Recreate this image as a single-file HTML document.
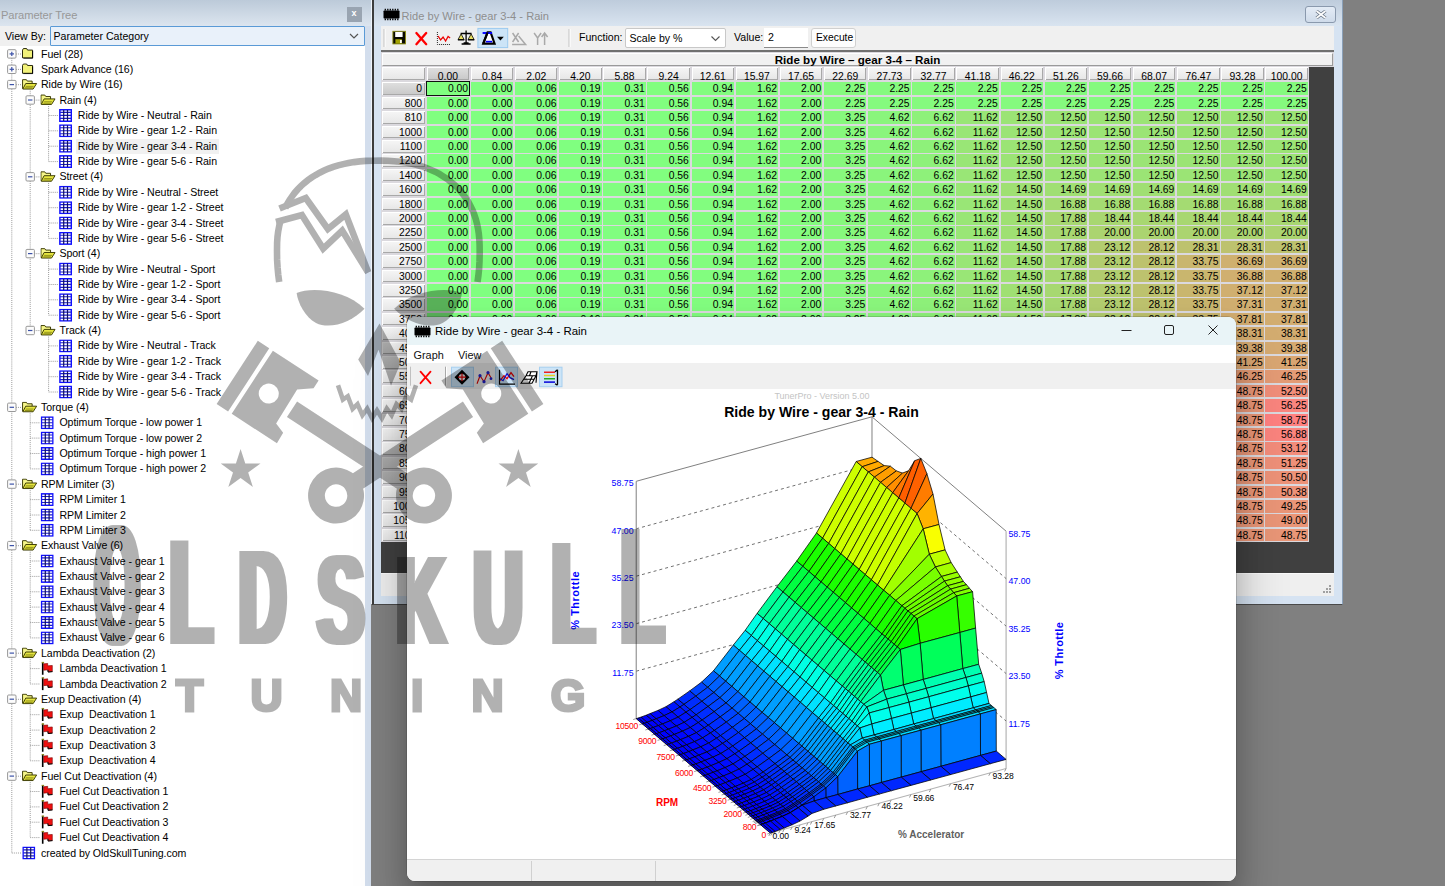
<!DOCTYPE html><html><head><meta charset="utf-8"><title>TunerPro</title><style>
*{box-sizing:border-box}
html,body{margin:0;padding:0}
body{width:1445px;height:886px;overflow:hidden;background:#808080;position:relative;font-family:"Liberation Sans",sans-serif;font-size:11px;color:#000}
.abs{position:absolute}
#lp{position:absolute;left:0;top:0;width:365px;height:886px;background:#fff}
#lpt{position:absolute;left:0;top:0;width:371px;height:26px;background:linear-gradient(#bccad9,#dce5ef)}
#lpt span{position:absolute;left:1px;top:9px;font-size:11.2px;color:#989898;letter-spacing:-0.1px}
#lpx{position:absolute;left:346.5px;top:7px;width:15px;height:15px;background:#99a4b1;color:#fff;font-weight:bold;font-size:9px;line-height:13px;text-align:center}
#vb{position:absolute;left:0;top:26px;width:365px;height:20px;background:#f0f0f0}
#vb span{position:absolute;left:5px;top:4px;font-size:10.6px}
#cb{position:absolute;left:50px;top:0;width:315px;height:20px;border:1px solid #5a9ad6;background:#e9f1fa;border-radius:1px}
#cb span{left:2.5px;top:3px}
.tl{position:absolute;white-space:pre;font-size:10.6px;line-height:15px;height:15px;padding:0 2px 0 1.5px;letter-spacing:-0.05px}
.tl.sel{background:#f1f1f1}
#split{position:absolute;left:365px;top:0;width:5.6px;height:886px;background:#d3deed}
#split2{position:absolute;left:370.6px;top:0;width:1.4px;height:604px;background:#eef3fa}
#tw{position:absolute;left:371.6px;top:-1px;width:971.9px;height:605.5px;background:#d6e3f2;border:1px solid #4a4a4a;border-left:2px solid #3c3c3c;border-top:none;border-right-color:#8aa0b8}
#twt{position:absolute;left:0;top:0;width:100%;height:27px;background:linear-gradient(#bdcbdb,#d9e4f0)}
#twt span{position:absolute;left:28px;top:10.5px;font-size:11.1px;color:#8e8e8e;white-space:pre}
#twx{position:absolute;left:931px;top:7px;width:31px;height:16.5px;border:1px solid #8a99ad;border-radius:3px;background:linear-gradient(#e4ecf6,#cfdbea)}
#tb{position:absolute;left:7.4px;top:27px;width:953.5px;height:24px;background:#f0f0f0}
#tb span{position:absolute;top:5px;font-size:10.6px;white-space:pre}
#tbl{position:absolute;left:7.4px;top:51px;width:953.5px;height:523px;background:#404040;border-top:2px solid #707070}
#cells{position:absolute;left:0;top:0;width:928px;height:490.2px;background:#dbd9de}
#ttlbg{position:absolute;left:0;top:0;width:953.5px;height:15px;background:#dbd9de}
#ttl{position:absolute;left:1px;top:0.5px;width:951px;height:13.5px;background:#f1f1f1;border:1px solid #fff;border-right-color:#9a9a9a;border-bottom-color:#9a9a9a;text-align:center;font-weight:bold;font-size:11.6px;line-height:12px;white-space:pre}
.grid{position:absolute;left:1.2px;top:15.4px;display:grid;grid-template-columns:42.8px repeat(20,42.35px);grid-template-rows:13.1px;grid-auto-rows:12.62px;column-gap:1.8px;row-gap:1.8px;font-size:10.35px;line-height:14px;text-align:right}
.grid i,.grid b{font-style:normal;font-weight:normal;display:block;overflow:hidden;padding-right:1px;white-space:pre}
.grid b{background:linear-gradient(#f6f6f6,#e6e6e6);box-shadow:inset 1px 1px 0 #fff,inset -1px -1px 0 #a8a8a8;padding-right:3px}
.grid b.h{text-align:center;padding:0;line-height:20.2px}
.grid b.hs{background:linear-gradient(#e0e0e0,#c8c8c8)}
.grid i.cur{outline:1.2px solid #111;outline-offset:-0.2px}
#sb{position:absolute;left:7.4px;top:574px;width:953.5px;height:23px;background:#efefef;border-top:1px solid #fafafa}
#gw{position:absolute;left:407px;top:317px;width:829px;height:563.5px;border-radius:8px;background:#fff;overflow:hidden;box-shadow:0 34px 50px 4px rgba(0,0,0,.22),0 12px 24px 0 rgba(0,0,0,.14),0 0 0 0.5px rgba(60,60,60,.4)}
#gwt{position:absolute;left:0;top:0;width:100%;height:28.2px;background:#e9f4f7}
#gwt span{position:absolute;left:28px;top:8px;font-size:11.45px;white-space:pre}
#gwm{position:absolute;left:0;top:28.2px;width:100%;height:18.1px;background:#fff}
#gwm span{position:absolute;top:3.6px;font-size:10.9px;color:#111}
#gtb{position:absolute;left:0;top:46.3px;width:100%;height:25.3px;background:#f0f0f0}
.hl{position:absolute;top:3px;height:19.5px;background:#cce4f7;border:1px solid #a9d1f1;border-radius:1px}
#gsb{position:absolute;left:0;top:541.5px;width:100%;height:22px;background:#f0f0f0;border-top:1px solid #d4d4d4}
#gsb i{position:absolute;top:1px;width:1px;height:20px;background:#d0d0d0}
.c0{background:#80ff80}.c1{background:#81fe80}.c2{background:#81fe7f}.c3{background:#82fd7f}.c4{background:#84fb7e}.c5{background:#85fa7e}.c6{background:#87f87d}.c7{background:#8af57c}.c8{background:#8ef17a}.c9{background:#99e676}.c10{background:#9be475}.c11{background:#9fe073}.c12{background:#a0df73}.c13{background:#a4db72}.c14{background:#a7d871}.c15{background:#a8d771}.c16{background:#abd470}.c17{background:#b2cd6f}.c18{background:#bdc26e}.c19{background:#c9b66e}.c20{background:#cfb06f}.c21{background:#d0af6f}.c22{background:#d0af70}.c23{background:#d1ae70}.c24{background:#d2ad70}.c25{background:#d3ac70}.c26{background:#d5aa71}.c27{background:#d9a672}.c28{background:#e49b75}.c29{background:#e99677}.c30{background:#f18e7a}.c31{background:#fa857e}.c32{background:#ff8080}.c33{background:#fb847e}.c34{background:#f38c7b}.c35{background:#ef9079}.c36{background:#ed9278}.c37{background:#ea9577}</style></head><body>
<svg width="0" height="0" style="position:absolute"><defs>
<symbol id="i-closed" viewBox="0 0 13 12"><path d="M0.5 2.5 L1.5 0.8 L5 0.8 L6 2.5 L11.5 2.5 L11.5 11 L0.5 11 Z" fill="#f2f27a" stroke="#1a1a00" stroke-width="1"/><path d="M11.5 3.5V11.5H1.5" stroke="#000" stroke-width="1" fill="none"/></symbol>
<symbol id="i-open" viewBox="0 0 16 12"><path d="M0.5 10.5 L0.5 1 L4.5 1 L5.5 2.5 L10.5 2.5 L10.5 5" fill="#f6f68a" stroke="#3a3a00" stroke-width="1"/><path d="M0.8 10.8 L3.8 5 L15.2 5 L11.5 10.8 Z" fill="#e6e640" stroke="#3a3a00" stroke-width="1"/><path d="M3 9.5 L11 9.5 M3.8 8 L12 8" stroke="#7a7a10" stroke-width="0.8"/></symbol>
<symbol id="i-tbl" viewBox="0 0 13 13"><rect x="0.75" y="0.75" width="11.5" height="11.5" fill="#fff" stroke="#1010ff" stroke-width="1.5"/><path d="M1 3.4H12M1 6.4H12M1 9.4H12" stroke="#1a1ad0" stroke-width="1.1"/><path d="M4.6 1V12M8.4 1V12" stroke="#101060" stroke-width="1.2"/></symbol>
<symbol id="i-flag" viewBox="0 0 13 13"><path d="M2 0.5V13" stroke="#000" stroke-width="1.6"/><path d="M1 0.6H3.4" stroke="#8a8a20" stroke-width="1.4"/><path d="M3 2 L7 1.6 L7 4 L11.6 3.6 L11.6 9.6 L7.4 10 L7.4 8 L3 8.4 Z" fill="#ee1010" stroke="#700" stroke-width="0.6"/><path d="M7.2 8 L7.4 10.2 L11.8 9.8" stroke="#000" stroke-width="1" fill="none"/></symbol>
<symbol id="i-box" viewBox="0 0 9 9"><rect x="0.5" y="0.5" width="8" height="8" rx="1" fill="#fdfdfd" stroke="#9a9a9a"/></symbol>
</defs></svg>
<div id="lp">
<svg style="position:absolute;left:0;top:0" width="365" height="886">
<g stroke="#9a9a9a" stroke-width="1" stroke-dasharray="1 1.05" fill="none">
<path d="M11.8 54.0L21.3 54.0"/>
<path d="M11.8 69.4L21.3 69.4"/>
<path d="M11.8 84.7L21.3 84.7"/>
<path d="M30.2 100.1L39.7 100.1"/>
<path d="M48.6 115.5L58.1 115.5"/>
<path d="M48.6 130.8L58.1 130.8"/>
<path d="M48.6 146.2L58.1 146.2"/>
<path d="M48.6 161.6L58.1 161.6"/>
<path d="M30.2 176.9L39.7 176.9"/>
<path d="M48.6 192.3L58.1 192.3"/>
<path d="M48.6 207.7L58.1 207.7"/>
<path d="M48.6 223.0L58.1 223.0"/>
<path d="M48.6 238.4L58.1 238.4"/>
<path d="M30.2 253.7L39.7 253.7"/>
<path d="M48.6 269.1L58.1 269.1"/>
<path d="M48.6 284.5L58.1 284.5"/>
<path d="M48.6 299.8L58.1 299.8"/>
<path d="M48.6 315.2L58.1 315.2"/>
<path d="M30.2 330.6L39.7 330.6"/>
<path d="M48.6 345.9L58.1 345.9"/>
<path d="M48.6 361.3L58.1 361.3"/>
<path d="M48.6 376.7L58.1 376.7"/>
<path d="M48.6 392.0L58.1 392.0"/>
<path d="M11.8 407.4L21.3 407.4"/>
<path d="M30.2 422.8L39.7 422.8"/>
<path d="M30.2 438.1L39.7 438.1"/>
<path d="M30.2 453.5L39.7 453.5"/>
<path d="M30.2 468.9L39.7 468.9"/>
<path d="M11.8 484.2L21.3 484.2"/>
<path d="M30.2 499.6L39.7 499.6"/>
<path d="M30.2 515.0L39.7 515.0"/>
<path d="M30.2 530.3L39.7 530.3"/>
<path d="M11.8 545.7L21.3 545.7"/>
<path d="M30.2 561.0L39.7 561.0"/>
<path d="M30.2 576.4L39.7 576.4"/>
<path d="M30.2 591.8L39.7 591.8"/>
<path d="M30.2 607.1L39.7 607.1"/>
<path d="M30.2 622.5L39.7 622.5"/>
<path d="M30.2 637.9L39.7 637.9"/>
<path d="M11.8 653.2L21.3 653.2"/>
<path d="M30.2 668.6L39.7 668.6"/>
<path d="M30.2 684.0L39.7 684.0"/>
<path d="M11.8 699.3L21.3 699.3"/>
<path d="M30.2 714.7L39.7 714.7"/>
<path d="M30.2 730.1L39.7 730.1"/>
<path d="M30.2 745.4L39.7 745.4"/>
<path d="M30.2 760.8L39.7 760.8"/>
<path d="M11.8 776.2L21.3 776.2"/>
<path d="M30.2 791.5L39.7 791.5"/>
<path d="M30.2 806.9L39.7 806.9"/>
<path d="M30.2 822.2L39.7 822.2"/>
<path d="M30.2 837.6L39.7 837.6"/>
<path d="M11.8 853.0L21.3 853.0"/>
<path d="M30.2 90.7L30.2 330.6"/>
<path d="M48.6 106.1L48.6 161.6"/>
<path d="M48.6 182.9L48.6 238.4"/>
<path d="M48.6 259.7L48.6 315.2"/>
<path d="M48.6 336.6L48.6 392.0"/>
<path d="M30.2 413.4L30.2 468.9"/>
<path d="M30.2 490.2L30.2 530.3"/>
<path d="M30.2 551.7L30.2 637.9"/>
<path d="M30.2 659.2L30.2 684.0"/>
<path d="M30.2 705.3L30.2 760.8"/>
<path d="M30.2 782.2L30.2 837.6"/>
<path d="M11.8 54.0L11.8 853.0"/>
</g>
<rect x="7.6" y="49.7" width="8.4" height="8.4" rx="1" fill="#fcfcfc" stroke="#989898" stroke-width="1"/>
<path d="M9.6 53.9H14.0" stroke="#3c52a8" stroke-width="1.2"/>
<path d="M11.8 51.7V56.1" stroke="#3c52a8" stroke-width="1.2"/>
<use href="#i-closed" x="22.0" y="47.8" width="12" height="11"/>
<rect x="7.6" y="65.1" width="8.4" height="8.4" rx="1" fill="#fcfcfc" stroke="#989898" stroke-width="1"/>
<path d="M9.6 69.3H14.0" stroke="#3c52a8" stroke-width="1.2"/>
<path d="M11.8 67.1V71.5" stroke="#3c52a8" stroke-width="1.2"/>
<use href="#i-closed" x="22.0" y="63.2" width="12" height="11"/>
<rect x="7.6" y="80.4" width="8.4" height="8.4" rx="1" fill="#fcfcfc" stroke="#989898" stroke-width="1"/>
<path d="M9.6 84.6H14.0" stroke="#3c52a8" stroke-width="1.2"/>
<use href="#i-open" x="22.0" y="78.7" width="15.5" height="11.5"/>
<rect x="26.0" y="95.8" width="8.4" height="8.4" rx="1" fill="#fcfcfc" stroke="#989898" stroke-width="1"/>
<path d="M28.0 100.0H32.4" stroke="#3c52a8" stroke-width="1.2"/>
<use href="#i-open" x="40.4" y="94.1" width="15.5" height="11.5"/>
<use href="#i-tbl" x="59.1" y="109.0" width="13" height="13"/>
<use href="#i-tbl" x="59.1" y="124.3" width="13" height="13"/>
<use href="#i-tbl" x="59.1" y="139.7" width="13" height="13"/>
<use href="#i-tbl" x="59.1" y="155.1" width="13" height="13"/>
<rect x="26.0" y="172.6" width="8.4" height="8.4" rx="1" fill="#fcfcfc" stroke="#989898" stroke-width="1"/>
<path d="M28.0 176.8H32.4" stroke="#3c52a8" stroke-width="1.2"/>
<use href="#i-open" x="40.4" y="170.9" width="15.5" height="11.5"/>
<use href="#i-tbl" x="59.1" y="185.8" width="13" height="13"/>
<use href="#i-tbl" x="59.1" y="201.2" width="13" height="13"/>
<use href="#i-tbl" x="59.1" y="216.5" width="13" height="13"/>
<use href="#i-tbl" x="59.1" y="231.9" width="13" height="13"/>
<rect x="26.0" y="249.4" width="8.4" height="8.4" rx="1" fill="#fcfcfc" stroke="#989898" stroke-width="1"/>
<path d="M28.0 253.6H32.4" stroke="#3c52a8" stroke-width="1.2"/>
<use href="#i-open" x="40.4" y="247.7" width="15.5" height="11.5"/>
<use href="#i-tbl" x="59.1" y="262.6" width="13" height="13"/>
<use href="#i-tbl" x="59.1" y="278.0" width="13" height="13"/>
<use href="#i-tbl" x="59.1" y="293.3" width="13" height="13"/>
<use href="#i-tbl" x="59.1" y="308.7" width="13" height="13"/>
<rect x="26.0" y="326.3" width="8.4" height="8.4" rx="1" fill="#fcfcfc" stroke="#989898" stroke-width="1"/>
<path d="M28.0 330.5H32.4" stroke="#3c52a8" stroke-width="1.2"/>
<use href="#i-open" x="40.4" y="324.6" width="15.5" height="11.5"/>
<use href="#i-tbl" x="59.1" y="339.4" width="13" height="13"/>
<use href="#i-tbl" x="59.1" y="354.8" width="13" height="13"/>
<use href="#i-tbl" x="59.1" y="370.2" width="13" height="13"/>
<use href="#i-tbl" x="59.1" y="385.5" width="13" height="13"/>
<rect x="7.6" y="403.1" width="8.4" height="8.4" rx="1" fill="#fcfcfc" stroke="#989898" stroke-width="1"/>
<path d="M9.6 407.3H14.0" stroke="#3c52a8" stroke-width="1.2"/>
<use href="#i-open" x="22.0" y="401.4" width="15.5" height="11.5"/>
<use href="#i-tbl" x="40.7" y="416.3" width="13" height="13"/>
<use href="#i-tbl" x="40.7" y="431.6" width="13" height="13"/>
<use href="#i-tbl" x="40.7" y="447.0" width="13" height="13"/>
<use href="#i-tbl" x="40.7" y="462.4" width="13" height="13"/>
<rect x="7.6" y="479.9" width="8.4" height="8.4" rx="1" fill="#fcfcfc" stroke="#989898" stroke-width="1"/>
<path d="M9.6 484.1H14.0" stroke="#3c52a8" stroke-width="1.2"/>
<use href="#i-open" x="22.0" y="478.2" width="15.5" height="11.5"/>
<use href="#i-tbl" x="40.7" y="493.1" width="13" height="13"/>
<use href="#i-tbl" x="40.7" y="508.5" width="13" height="13"/>
<use href="#i-tbl" x="40.7" y="523.8" width="13" height="13"/>
<rect x="7.6" y="541.4" width="8.4" height="8.4" rx="1" fill="#fcfcfc" stroke="#989898" stroke-width="1"/>
<path d="M9.6 545.6H14.0" stroke="#3c52a8" stroke-width="1.2"/>
<use href="#i-open" x="22.0" y="539.7" width="15.5" height="11.5"/>
<use href="#i-tbl" x="40.7" y="554.5" width="13" height="13"/>
<use href="#i-tbl" x="40.7" y="569.9" width="13" height="13"/>
<use href="#i-tbl" x="40.7" y="585.3" width="13" height="13"/>
<use href="#i-tbl" x="40.7" y="600.6" width="13" height="13"/>
<use href="#i-tbl" x="40.7" y="616.0" width="13" height="13"/>
<use href="#i-tbl" x="40.7" y="631.4" width="13" height="13"/>
<rect x="7.6" y="648.9" width="8.4" height="8.4" rx="1" fill="#fcfcfc" stroke="#989898" stroke-width="1"/>
<path d="M9.6 653.1H14.0" stroke="#3c52a8" stroke-width="1.2"/>
<use href="#i-open" x="22.0" y="647.2" width="15.5" height="11.5"/>
<use href="#i-flag" x="40.7" y="661.6" width="13" height="13.5"/>
<use href="#i-flag" x="40.7" y="677.0" width="13" height="13.5"/>
<rect x="7.6" y="695.0" width="8.4" height="8.4" rx="1" fill="#fcfcfc" stroke="#989898" stroke-width="1"/>
<path d="M9.6 699.2H14.0" stroke="#3c52a8" stroke-width="1.2"/>
<use href="#i-open" x="22.0" y="693.3" width="15.5" height="11.5"/>
<use href="#i-flag" x="40.7" y="707.7" width="13" height="13.5"/>
<use href="#i-flag" x="40.7" y="723.1" width="13" height="13.5"/>
<use href="#i-flag" x="40.7" y="738.4" width="13" height="13.5"/>
<use href="#i-flag" x="40.7" y="753.8" width="13" height="13.5"/>
<rect x="7.6" y="771.9" width="8.4" height="8.4" rx="1" fill="#fcfcfc" stroke="#989898" stroke-width="1"/>
<path d="M9.6 776.1H14.0" stroke="#3c52a8" stroke-width="1.2"/>
<use href="#i-open" x="22.0" y="770.2" width="15.5" height="11.5"/>
<use href="#i-flag" x="40.7" y="784.5" width="13" height="13.5"/>
<use href="#i-flag" x="40.7" y="799.9" width="13" height="13.5"/>
<use href="#i-flag" x="40.7" y="815.2" width="13" height="13.5"/>
<use href="#i-flag" x="40.7" y="830.6" width="13" height="13.5"/>
<use href="#i-tbl" x="22.3" y="846.5" width="13" height="13"/>
</svg>
<div class="tl" style="left:39.5px;top:46.5px">Fuel (28)</div>
<div class="tl" style="left:39.5px;top:61.9px">Spark Advance (16)</div>
<div class="tl" style="left:39.5px;top:77.2px">Ride by Wire (16)</div>
<div class="tl" style="left:57.9px;top:92.6px">Rain (4)</div>
<div class="tl" style="left:76.3px;top:108.0px">Ride by Wire - Neutral - Rain</div>
<div class="tl" style="left:76.3px;top:123.3px">Ride by Wire - gear 1-2 - Rain</div>
<div class="tl sel" style="left:76.3px;top:138.7px">Ride by Wire - gear 3-4 - Rain</div>
<div class="tl" style="left:76.3px;top:154.1px">Ride by Wire - gear 5-6 - Rain</div>
<div class="tl" style="left:57.9px;top:169.4px">Street (4)</div>
<div class="tl" style="left:76.3px;top:184.8px">Ride by Wire - Neutral - Street</div>
<div class="tl" style="left:76.3px;top:200.2px">Ride by Wire - gear 1-2 - Street</div>
<div class="tl" style="left:76.3px;top:215.5px">Ride by Wire - gear 3-4 - Street</div>
<div class="tl" style="left:76.3px;top:230.9px">Ride by Wire - gear 5-6 - Street</div>
<div class="tl" style="left:57.9px;top:246.2px">Sport (4)</div>
<div class="tl" style="left:76.3px;top:261.6px">Ride by Wire - Neutral - Sport</div>
<div class="tl" style="left:76.3px;top:277.0px">Ride by Wire - gear 1-2 - Sport</div>
<div class="tl" style="left:76.3px;top:292.3px">Ride by Wire - gear 3-4 - Sport</div>
<div class="tl" style="left:76.3px;top:307.7px">Ride by Wire - gear 5-6 - Sport</div>
<div class="tl" style="left:57.9px;top:323.1px">Track (4)</div>
<div class="tl" style="left:76.3px;top:338.4px">Ride by Wire - Neutral - Track</div>
<div class="tl" style="left:76.3px;top:353.8px">Ride by Wire - gear 1-2 - Track</div>
<div class="tl" style="left:76.3px;top:369.2px">Ride by Wire - gear 3-4 - Track</div>
<div class="tl" style="left:76.3px;top:384.5px">Ride by Wire - gear 5-6 - Track</div>
<div class="tl" style="left:39.5px;top:399.9px">Torque (4)</div>
<div class="tl" style="left:57.9px;top:415.3px">Optimum Torque - low power 1</div>
<div class="tl" style="left:57.9px;top:430.6px">Optimum Torque - low power 2</div>
<div class="tl" style="left:57.9px;top:446.0px">Optimum Torque - high power 1</div>
<div class="tl" style="left:57.9px;top:461.4px">Optimum Torque - high power 2</div>
<div class="tl" style="left:39.5px;top:476.7px">RPM Limiter (3)</div>
<div class="tl" style="left:57.9px;top:492.1px">RPM Limiter 1</div>
<div class="tl" style="left:57.9px;top:507.5px">RPM Limiter 2</div>
<div class="tl" style="left:57.9px;top:522.8px">RPM Limiter 3</div>
<div class="tl" style="left:39.5px;top:538.2px">Exhaust Valve (6)</div>
<div class="tl" style="left:57.9px;top:553.5px">Exhaust Valve - gear 1</div>
<div class="tl" style="left:57.9px;top:568.9px">Exhaust Valve - gear 2</div>
<div class="tl" style="left:57.9px;top:584.3px">Exhaust Valve - gear 3</div>
<div class="tl" style="left:57.9px;top:599.6px">Exhaust Valve - gear 4</div>
<div class="tl" style="left:57.9px;top:615.0px">Exhaust Valve - gear 5</div>
<div class="tl" style="left:57.9px;top:630.4px">Exhaust Valve - gear 6</div>
<div class="tl" style="left:39.5px;top:645.7px">Lambda Deactivation (2)</div>
<div class="tl" style="left:57.9px;top:661.1px">Lambda Deactivation 1</div>
<div class="tl" style="left:57.9px;top:676.5px">Lambda Deactivation 2</div>
<div class="tl" style="left:39.5px;top:691.8px">Exup Deactivation (4)</div>
<div class="tl" style="left:57.9px;top:707.2px">Exup  Deactivation 1</div>
<div class="tl" style="left:57.9px;top:722.6px">Exup  Deactivation 2</div>
<div class="tl" style="left:57.9px;top:737.9px">Exup  Deactivation 3</div>
<div class="tl" style="left:57.9px;top:753.3px">Exup  Deactivation 4</div>
<div class="tl" style="left:39.5px;top:768.7px">Fuel Cut Deactivation (4)</div>
<div class="tl" style="left:57.9px;top:784.0px">Fuel Cut Deactivation 1</div>
<div class="tl" style="left:57.9px;top:799.4px">Fuel Cut Deactivation 2</div>
<div class="tl" style="left:57.9px;top:814.8px">Fuel Cut Deactivation 3</div>
<div class="tl" style="left:57.9px;top:830.1px">Fuel Cut Deactivation 4</div>
<div class="tl" style="left:39.5px;top:845.5px">created by OldSkullTuning.com</div>
</div>
<div id="split"></div><div id="split2"></div>
<div id="lpt"><span>Parameter Tree</span><div id="lpx">x</div></div>
<div id="vb"><span>View By:</span><div id="cb"><span>Parameter Category</span><svg class="abs" style="right:5px;top:6px" width="10" height="7"><path d="M1 1L5 5L9 1" fill="none" stroke="#555" stroke-width="1.2"/></svg></div></div>
<div id="tw"><div id="twt">
<svg class="abs" style="left:9px;top:9px" width="17" height="13" viewBox="0 0 17 13"><rect x="0.5" y="2.4" width="16" height="8.2" rx="0.8" fill="#000"/><path d="M2.3 0.8V2.6M4.8 0.8V2.6M7.3 0.8V2.6M9.8 0.8V2.6M12.3 0.8V2.6M14.8 0.8V2.6M2.3 10.4V12.2M4.8 10.4V12.2M7.3 10.4V12.2M9.8 10.4V12.2M12.3 10.4V12.2M14.8 10.4V12.2" stroke="#000" stroke-width="1.3"/></svg>
<span>Ride by Wire - gear 3-4 - Rain</span>
<div id="twx"><svg class="abs" style="left:9px;top:3px" width="12" height="9" viewBox="0 0 12 9"><path d="M1.5 1L10.5 8M10.5 1L1.5 8" stroke="#6a7686" stroke-width="3.2"/><path d="M1.5 1L10.5 8M10.5 1L1.5 8" stroke="#fff" stroke-width="1.6"/></svg></div>
</div>
<div id="tb"><svg class="abs" style="left:0;top:0" width="400" height="24" viewBox="380.4 26 400 24">
<path d="M383.5 29V47" stroke="#b8b8b8" stroke-width="1"/><path d="M384.5 29V47" stroke="#fff" stroke-width="1"/>
<rect x="392.3" y="31.3" width="12.6" height="12.6" fill="#0a0a00" stroke="#8a8a10" stroke-width="0.9"/><rect x="394.6" y="32" width="7.4" height="5" fill="#fff"/><rect x="394.8" y="39.2" width="6.4" height="4.4" fill="#a4a400"/><rect x="399.4" y="40" width="1.8" height="3" fill="#fff"/>
<path d="M415.8 33L425.6 44.2M425.6 33L415.8 44.2" stroke="#f00" stroke-width="2.3" stroke-linecap="round"/>
<path d="M436.8 32V44.5H450" stroke="#222" stroke-width="1" stroke-dasharray="1 1" fill="none"/><path d="M437.5 36L440 40L442.5 37L445 41L447.5 36.5L449.5 38" stroke="#e00" stroke-width="1.3" fill="none"/>
<path d="M465.5 30.5V43M460 33.5H471M461 44H470M463 43H468" stroke="#000" stroke-width="1.3" fill="none"/><path d="M457.5 39.5L460.5 34L463.5 39.5ZM467.5 39.5L470.5 34L473.5 39.5Z" fill="#e8e060" stroke="#000" stroke-width="0.8"/><path d="M457.3 39.8H463.7M467.3 39.8H473.7" stroke="#000" stroke-width="1.2"/>
<rect x="477.3" y="28.4" width="29.8" height="19.2" fill="#cce4f7" stroke="#9ccaf0"/>
<path d="M482.6 43.6H494L490 32.3H487Z" fill="#fff" stroke="#000" stroke-width="2.1" stroke-linejoin="miter"/><path d="M482 33H491.5" stroke="#00f" stroke-width="1.9"/><path d="M485.2 41.6H491.6" stroke="#00f" stroke-width="1.6"/><path d="M487 32.3L482.6 43.6" stroke="#000" stroke-width="2.1"/><path d="M496.4 36.8H503.2L499.8 40.6Z" fill="#000"/>
<path d="M512 33L518 42M518 33L512 42M511.5 44.5H525L518 36" stroke="#a9a9a9" stroke-width="1.5" fill="none"/>
<path d="M533.5 33L537 38L540.5 33M537 38V45M544 45V33.5M541 37L544 33L547 37" stroke="#a9a9a9" stroke-width="1.5" fill="none"/>
<path d="M568.5 29V47" stroke="#b8b8b8" stroke-width="1"/><path d="M569.5 29V47" stroke="#fff" stroke-width="1"/>
</svg>
<span style="left:198px">Function:</span>
<div class="abs" style="left:244.5px;top:1.5px;width:101px;height:20px;background:#fff;border:1px solid #c8c8c8;border-radius:2px"><span style="left:3px;top:3.5px">Scale by %</span><svg class="abs" style="right:5px;top:7px" width="9" height="6"><path d="M0.5 0.5L4.5 4.5L8.5 0.5" fill="none" stroke="#555" stroke-width="1.1"/></svg></div>
<span style="left:353px">Value:</span>
<div class="abs" style="left:383px;top:1.5px;width:44px;height:20px;background:#fff;border-bottom:1px solid #8a8a8a"><span style="left:4px;top:3.5px">2</span></div>
<div class="abs" style="left:430.5px;top:2px;width:45px;height:19.5px;background:#fdfdfd;border:1px solid #d0d0d0;border-radius:3px"><span style="left:3.5px;top:3px;font-size:10.3px">Execute</span></div></div>
<div id="tbl"><div id="cells"><div class="grid">
<b class="h"></b>
<b class="h hs">0.00</b>
<b class="h">0.84</b>
<b class="h">2.02</b>
<b class="h">4.20</b>
<b class="h">5.88</b>
<b class="h">9.24</b>
<b class="h">12.61</b>
<b class="h">15.97</b>
<b class="h">17.65</b>
<b class="h">22.69</b>
<b class="h">27.73</b>
<b class="h">32.77</b>
<b class="h">41.18</b>
<b class="h">46.22</b>
<b class="h">51.26</b>
<b class="h">59.66</b>
<b class="h">68.07</b>
<b class="h">76.47</b>
<b class="h">93.28</b>
<b class="h">100.00</b>
<b class="r hs">0</b>
<i class="c0 cur">0.00</i>
<i class="c0">0.00</i>
<i class="c0">0.06</i>
<i class="c0">0.19</i>
<i class="c1">0.31</i>
<i class="c2">0.56</i>
<i class="c3">0.94</i>
<i class="c4">1.62</i>
<i class="c4">2.00</i>
<i class="c5">2.25</i>
<i class="c5">2.25</i>
<i class="c5">2.25</i>
<i class="c5">2.25</i>
<i class="c5">2.25</i>
<i class="c5">2.25</i>
<i class="c5">2.25</i>
<i class="c5">2.25</i>
<i class="c5">2.25</i>
<i class="c5">2.25</i>
<i class="c5">2.25</i>
<b class="r">800</b>
<i class="c0">0.00</i>
<i class="c0">0.00</i>
<i class="c0">0.06</i>
<i class="c0">0.19</i>
<i class="c1">0.31</i>
<i class="c2">0.56</i>
<i class="c3">0.94</i>
<i class="c4">1.62</i>
<i class="c4">2.00</i>
<i class="c5">2.25</i>
<i class="c5">2.25</i>
<i class="c5">2.25</i>
<i class="c5">2.25</i>
<i class="c5">2.25</i>
<i class="c5">2.25</i>
<i class="c5">2.25</i>
<i class="c5">2.25</i>
<i class="c5">2.25</i>
<i class="c5">2.25</i>
<i class="c5">2.25</i>
<b class="r">810</b>
<i class="c0">0.00</i>
<i class="c0">0.00</i>
<i class="c0">0.06</i>
<i class="c0">0.19</i>
<i class="c1">0.31</i>
<i class="c2">0.56</i>
<i class="c3">0.94</i>
<i class="c4">1.62</i>
<i class="c4">2.00</i>
<i class="c6">3.25</i>
<i class="c7">4.62</i>
<i class="c8">6.62</i>
<i class="c9">11.62</i>
<i class="c10">12.50</i>
<i class="c10">12.50</i>
<i class="c10">12.50</i>
<i class="c10">12.50</i>
<i class="c10">12.50</i>
<i class="c10">12.50</i>
<i class="c10">12.50</i>
<b class="r">1000</b>
<i class="c0">0.00</i>
<i class="c0">0.00</i>
<i class="c0">0.06</i>
<i class="c0">0.19</i>
<i class="c1">0.31</i>
<i class="c2">0.56</i>
<i class="c3">0.94</i>
<i class="c4">1.62</i>
<i class="c4">2.00</i>
<i class="c6">3.25</i>
<i class="c7">4.62</i>
<i class="c8">6.62</i>
<i class="c9">11.62</i>
<i class="c10">12.50</i>
<i class="c10">12.50</i>
<i class="c10">12.50</i>
<i class="c10">12.50</i>
<i class="c10">12.50</i>
<i class="c10">12.50</i>
<i class="c10">12.50</i>
<b class="r">1100</b>
<i class="c0">0.00</i>
<i class="c0">0.00</i>
<i class="c0">0.06</i>
<i class="c0">0.19</i>
<i class="c1">0.31</i>
<i class="c2">0.56</i>
<i class="c3">0.94</i>
<i class="c4">1.62</i>
<i class="c4">2.00</i>
<i class="c6">3.25</i>
<i class="c7">4.62</i>
<i class="c8">6.62</i>
<i class="c9">11.62</i>
<i class="c10">12.50</i>
<i class="c10">12.50</i>
<i class="c10">12.50</i>
<i class="c10">12.50</i>
<i class="c10">12.50</i>
<i class="c10">12.50</i>
<i class="c10">12.50</i>
<b class="r">1200</b>
<i class="c0">0.00</i>
<i class="c0">0.00</i>
<i class="c0">0.06</i>
<i class="c0">0.19</i>
<i class="c1">0.31</i>
<i class="c2">0.56</i>
<i class="c3">0.94</i>
<i class="c4">1.62</i>
<i class="c4">2.00</i>
<i class="c6">3.25</i>
<i class="c7">4.62</i>
<i class="c8">6.62</i>
<i class="c9">11.62</i>
<i class="c10">12.50</i>
<i class="c10">12.50</i>
<i class="c10">12.50</i>
<i class="c10">12.50</i>
<i class="c10">12.50</i>
<i class="c10">12.50</i>
<i class="c10">12.50</i>
<b class="r">1400</b>
<i class="c0">0.00</i>
<i class="c0">0.00</i>
<i class="c0">0.06</i>
<i class="c0">0.19</i>
<i class="c1">0.31</i>
<i class="c2">0.56</i>
<i class="c3">0.94</i>
<i class="c4">1.62</i>
<i class="c4">2.00</i>
<i class="c6">3.25</i>
<i class="c7">4.62</i>
<i class="c8">6.62</i>
<i class="c9">11.62</i>
<i class="c10">12.50</i>
<i class="c10">12.50</i>
<i class="c10">12.50</i>
<i class="c10">12.50</i>
<i class="c10">12.50</i>
<i class="c10">12.50</i>
<i class="c10">12.50</i>
<b class="r">1600</b>
<i class="c0">0.00</i>
<i class="c0">0.00</i>
<i class="c0">0.06</i>
<i class="c0">0.19</i>
<i class="c1">0.31</i>
<i class="c2">0.56</i>
<i class="c3">0.94</i>
<i class="c4">1.62</i>
<i class="c4">2.00</i>
<i class="c6">3.25</i>
<i class="c7">4.62</i>
<i class="c8">6.62</i>
<i class="c9">11.62</i>
<i class="c11">14.50</i>
<i class="c12">14.69</i>
<i class="c12">14.69</i>
<i class="c12">14.69</i>
<i class="c12">14.69</i>
<i class="c12">14.69</i>
<i class="c12">14.69</i>
<b class="r">1800</b>
<i class="c0">0.00</i>
<i class="c0">0.00</i>
<i class="c0">0.06</i>
<i class="c0">0.19</i>
<i class="c1">0.31</i>
<i class="c2">0.56</i>
<i class="c3">0.94</i>
<i class="c4">1.62</i>
<i class="c4">2.00</i>
<i class="c6">3.25</i>
<i class="c7">4.62</i>
<i class="c8">6.62</i>
<i class="c9">11.62</i>
<i class="c11">14.50</i>
<i class="c13">16.88</i>
<i class="c13">16.88</i>
<i class="c13">16.88</i>
<i class="c13">16.88</i>
<i class="c13">16.88</i>
<i class="c13">16.88</i>
<b class="r">2000</b>
<i class="c0">0.00</i>
<i class="c0">0.00</i>
<i class="c0">0.06</i>
<i class="c0">0.19</i>
<i class="c1">0.31</i>
<i class="c2">0.56</i>
<i class="c3">0.94</i>
<i class="c4">1.62</i>
<i class="c4">2.00</i>
<i class="c6">3.25</i>
<i class="c7">4.62</i>
<i class="c8">6.62</i>
<i class="c9">11.62</i>
<i class="c11">14.50</i>
<i class="c14">17.88</i>
<i class="c15">18.44</i>
<i class="c15">18.44</i>
<i class="c15">18.44</i>
<i class="c15">18.44</i>
<i class="c15">18.44</i>
<b class="r">2250</b>
<i class="c0">0.00</i>
<i class="c0">0.00</i>
<i class="c0">0.06</i>
<i class="c0">0.19</i>
<i class="c1">0.31</i>
<i class="c2">0.56</i>
<i class="c3">0.94</i>
<i class="c4">1.62</i>
<i class="c4">2.00</i>
<i class="c6">3.25</i>
<i class="c7">4.62</i>
<i class="c8">6.62</i>
<i class="c9">11.62</i>
<i class="c11">14.50</i>
<i class="c14">17.88</i>
<i class="c16">20.00</i>
<i class="c16">20.00</i>
<i class="c16">20.00</i>
<i class="c16">20.00</i>
<i class="c16">20.00</i>
<b class="r">2500</b>
<i class="c0">0.00</i>
<i class="c0">0.00</i>
<i class="c0">0.06</i>
<i class="c0">0.19</i>
<i class="c1">0.31</i>
<i class="c2">0.56</i>
<i class="c3">0.94</i>
<i class="c4">1.62</i>
<i class="c4">2.00</i>
<i class="c6">3.25</i>
<i class="c7">4.62</i>
<i class="c8">6.62</i>
<i class="c9">11.62</i>
<i class="c11">14.50</i>
<i class="c14">17.88</i>
<i class="c17">23.12</i>
<i class="c18">28.12</i>
<i class="c18">28.31</i>
<i class="c18">28.31</i>
<i class="c18">28.31</i>
<b class="r">2750</b>
<i class="c0">0.00</i>
<i class="c0">0.00</i>
<i class="c0">0.06</i>
<i class="c0">0.19</i>
<i class="c1">0.31</i>
<i class="c2">0.56</i>
<i class="c3">0.94</i>
<i class="c4">1.62</i>
<i class="c4">2.00</i>
<i class="c6">3.25</i>
<i class="c7">4.62</i>
<i class="c8">6.62</i>
<i class="c9">11.62</i>
<i class="c11">14.50</i>
<i class="c14">17.88</i>
<i class="c17">23.12</i>
<i class="c18">28.12</i>
<i class="c19">33.75</i>
<i class="c20">36.69</i>
<i class="c20">36.69</i>
<b class="r">3000</b>
<i class="c0">0.00</i>
<i class="c0">0.00</i>
<i class="c0">0.06</i>
<i class="c0">0.19</i>
<i class="c1">0.31</i>
<i class="c2">0.56</i>
<i class="c3">0.94</i>
<i class="c4">1.62</i>
<i class="c4">2.00</i>
<i class="c6">3.25</i>
<i class="c7">4.62</i>
<i class="c8">6.62</i>
<i class="c9">11.62</i>
<i class="c11">14.50</i>
<i class="c14">17.88</i>
<i class="c17">23.12</i>
<i class="c18">28.12</i>
<i class="c19">33.75</i>
<i class="c21">36.88</i>
<i class="c21">36.88</i>
<b class="r">3250</b>
<i class="c0">0.00</i>
<i class="c0">0.00</i>
<i class="c0">0.06</i>
<i class="c0">0.19</i>
<i class="c1">0.31</i>
<i class="c2">0.56</i>
<i class="c3">0.94</i>
<i class="c4">1.62</i>
<i class="c4">2.00</i>
<i class="c6">3.25</i>
<i class="c7">4.62</i>
<i class="c8">6.62</i>
<i class="c9">11.62</i>
<i class="c11">14.50</i>
<i class="c14">17.88</i>
<i class="c17">23.12</i>
<i class="c18">28.12</i>
<i class="c19">33.75</i>
<i class="c22">37.12</i>
<i class="c22">37.12</i>
<b class="r">3500</b>
<i class="c0">0.00</i>
<i class="c0">0.00</i>
<i class="c0">0.06</i>
<i class="c0">0.19</i>
<i class="c1">0.31</i>
<i class="c2">0.56</i>
<i class="c3">0.94</i>
<i class="c4">1.62</i>
<i class="c4">2.00</i>
<i class="c6">3.25</i>
<i class="c7">4.62</i>
<i class="c8">6.62</i>
<i class="c9">11.62</i>
<i class="c11">14.50</i>
<i class="c14">17.88</i>
<i class="c17">23.12</i>
<i class="c18">28.12</i>
<i class="c19">33.75</i>
<i class="c23">37.31</i>
<i class="c23">37.31</i>
<b class="r">3750</b>
<i class="c0">0.00</i>
<i class="c0">0.00</i>
<i class="c0">0.06</i>
<i class="c0">0.19</i>
<i class="c1">0.31</i>
<i class="c2">0.56</i>
<i class="c3">0.94</i>
<i class="c4">1.62</i>
<i class="c4">2.00</i>
<i class="c6">3.25</i>
<i class="c7">4.62</i>
<i class="c8">6.62</i>
<i class="c9">11.62</i>
<i class="c11">14.50</i>
<i class="c14">17.88</i>
<i class="c17">23.12</i>
<i class="c18">28.12</i>
<i class="c19">33.75</i>
<i class="c24">37.81</i>
<i class="c24">37.81</i>
<b class="r">4000</b>
<i class="c0">0.00</i>
<i class="c0">0.00</i>
<i class="c0">0.06</i>
<i class="c0">0.19</i>
<i class="c1">0.31</i>
<i class="c2">0.56</i>
<i class="c3">0.94</i>
<i class="c4">1.62</i>
<i class="c4">2.00</i>
<i class="c6">3.25</i>
<i class="c7">4.62</i>
<i class="c8">6.62</i>
<i class="c9">11.62</i>
<i class="c11">14.50</i>
<i class="c14">17.88</i>
<i class="c17">23.12</i>
<i class="c18">28.12</i>
<i class="c19">33.75</i>
<i class="c25">38.31</i>
<i class="c25">38.31</i>
<b class="r">4500</b>
<i class="c0">0.00</i>
<i class="c0">0.00</i>
<i class="c0">0.06</i>
<i class="c0">0.19</i>
<i class="c1">0.31</i>
<i class="c2">0.56</i>
<i class="c3">0.94</i>
<i class="c4">1.62</i>
<i class="c4">2.00</i>
<i class="c6">3.25</i>
<i class="c7">4.62</i>
<i class="c8">6.62</i>
<i class="c9">11.62</i>
<i class="c11">14.50</i>
<i class="c14">17.88</i>
<i class="c17">23.12</i>
<i class="c18">28.12</i>
<i class="c19">33.75</i>
<i class="c26">39.38</i>
<i class="c26">39.38</i>
<b class="r">5000</b>
<i class="c0">0.00</i>
<i class="c0">0.00</i>
<i class="c0">0.06</i>
<i class="c0">0.19</i>
<i class="c1">0.31</i>
<i class="c2">0.56</i>
<i class="c3">0.94</i>
<i class="c4">1.62</i>
<i class="c4">2.00</i>
<i class="c6">3.25</i>
<i class="c7">4.62</i>
<i class="c8">6.62</i>
<i class="c9">11.62</i>
<i class="c11">14.50</i>
<i class="c14">17.88</i>
<i class="c17">23.12</i>
<i class="c18">28.12</i>
<i class="c19">33.75</i>
<i class="c27">41.25</i>
<i class="c27">41.25</i>
<b class="r">5500</b>
<i class="c0">0.00</i>
<i class="c0">0.00</i>
<i class="c0">0.06</i>
<i class="c0">0.19</i>
<i class="c1">0.31</i>
<i class="c2">0.56</i>
<i class="c3">0.94</i>
<i class="c4">1.62</i>
<i class="c4">2.00</i>
<i class="c6">3.25</i>
<i class="c7">4.62</i>
<i class="c8">6.62</i>
<i class="c9">11.62</i>
<i class="c11">14.50</i>
<i class="c14">17.88</i>
<i class="c17">23.12</i>
<i class="c18">28.12</i>
<i class="c19">33.75</i>
<i class="c28">46.25</i>
<i class="c28">46.25</i>
<b class="r">6000</b>
<i class="c0">0.00</i>
<i class="c0">0.00</i>
<i class="c0">0.06</i>
<i class="c0">0.19</i>
<i class="c1">0.31</i>
<i class="c2">0.56</i>
<i class="c3">0.94</i>
<i class="c4">1.62</i>
<i class="c4">2.00</i>
<i class="c6">3.25</i>
<i class="c7">4.62</i>
<i class="c8">6.62</i>
<i class="c9">11.62</i>
<i class="c11">14.50</i>
<i class="c14">17.88</i>
<i class="c17">23.12</i>
<i class="c18">28.12</i>
<i class="c19">33.75</i>
<i class="c29">48.75</i>
<i class="c30">52.50</i>
<b class="r">6500</b>
<i class="c0">0.00</i>
<i class="c0">0.00</i>
<i class="c0">0.06</i>
<i class="c0">0.19</i>
<i class="c1">0.31</i>
<i class="c2">0.56</i>
<i class="c3">0.94</i>
<i class="c4">1.62</i>
<i class="c4">2.00</i>
<i class="c6">3.25</i>
<i class="c7">4.62</i>
<i class="c8">6.62</i>
<i class="c9">11.62</i>
<i class="c11">14.50</i>
<i class="c14">17.88</i>
<i class="c17">23.12</i>
<i class="c18">28.12</i>
<i class="c19">33.75</i>
<i class="c29">48.75</i>
<i class="c31">56.25</i>
<b class="r">7000</b>
<i class="c0">0.00</i>
<i class="c0">0.00</i>
<i class="c0">0.06</i>
<i class="c0">0.19</i>
<i class="c1">0.31</i>
<i class="c2">0.56</i>
<i class="c3">0.94</i>
<i class="c4">1.62</i>
<i class="c4">2.00</i>
<i class="c6">3.25</i>
<i class="c7">4.62</i>
<i class="c8">6.62</i>
<i class="c9">11.62</i>
<i class="c11">14.50</i>
<i class="c14">17.88</i>
<i class="c17">23.12</i>
<i class="c18">28.12</i>
<i class="c19">33.75</i>
<i class="c29">48.75</i>
<i class="c32">58.75</i>
<b class="r">7500</b>
<i class="c0">0.00</i>
<i class="c0">0.00</i>
<i class="c0">0.06</i>
<i class="c0">0.19</i>
<i class="c1">0.31</i>
<i class="c2">0.56</i>
<i class="c3">0.94</i>
<i class="c4">1.62</i>
<i class="c4">2.00</i>
<i class="c6">3.25</i>
<i class="c7">4.62</i>
<i class="c8">6.62</i>
<i class="c9">11.62</i>
<i class="c11">14.50</i>
<i class="c14">17.88</i>
<i class="c17">23.12</i>
<i class="c18">28.12</i>
<i class="c19">33.75</i>
<i class="c29">48.75</i>
<i class="c33">56.88</i>
<b class="r">8000</b>
<i class="c0">0.00</i>
<i class="c0">0.00</i>
<i class="c0">0.06</i>
<i class="c0">0.19</i>
<i class="c1">0.31</i>
<i class="c2">0.56</i>
<i class="c3">0.94</i>
<i class="c4">1.62</i>
<i class="c4">2.00</i>
<i class="c6">3.25</i>
<i class="c7">4.62</i>
<i class="c8">6.62</i>
<i class="c9">11.62</i>
<i class="c11">14.50</i>
<i class="c14">17.88</i>
<i class="c17">23.12</i>
<i class="c18">28.12</i>
<i class="c19">33.75</i>
<i class="c29">48.75</i>
<i class="c34">53.12</i>
<b class="r">8500</b>
<i class="c0">0.00</i>
<i class="c0">0.00</i>
<i class="c0">0.06</i>
<i class="c0">0.19</i>
<i class="c1">0.31</i>
<i class="c2">0.56</i>
<i class="c3">0.94</i>
<i class="c4">1.62</i>
<i class="c4">2.00</i>
<i class="c6">3.25</i>
<i class="c7">4.62</i>
<i class="c8">6.62</i>
<i class="c9">11.62</i>
<i class="c11">14.50</i>
<i class="c14">17.88</i>
<i class="c17">23.12</i>
<i class="c18">28.12</i>
<i class="c19">33.75</i>
<i class="c29">48.75</i>
<i class="c35">51.25</i>
<b class="r">9000</b>
<i class="c0">0.00</i>
<i class="c0">0.00</i>
<i class="c0">0.06</i>
<i class="c0">0.19</i>
<i class="c1">0.31</i>
<i class="c2">0.56</i>
<i class="c3">0.94</i>
<i class="c4">1.62</i>
<i class="c4">2.00</i>
<i class="c6">3.25</i>
<i class="c7">4.62</i>
<i class="c8">6.62</i>
<i class="c9">11.62</i>
<i class="c11">14.50</i>
<i class="c14">17.88</i>
<i class="c17">23.12</i>
<i class="c18">28.12</i>
<i class="c19">33.75</i>
<i class="c29">48.75</i>
<i class="c36">50.50</i>
<b class="r">9500</b>
<i class="c0">0.00</i>
<i class="c0">0.00</i>
<i class="c0">0.06</i>
<i class="c0">0.19</i>
<i class="c1">0.31</i>
<i class="c2">0.56</i>
<i class="c3">0.94</i>
<i class="c4">1.62</i>
<i class="c4">2.00</i>
<i class="c6">3.25</i>
<i class="c7">4.62</i>
<i class="c8">6.62</i>
<i class="c9">11.62</i>
<i class="c11">14.50</i>
<i class="c14">17.88</i>
<i class="c17">23.12</i>
<i class="c18">28.12</i>
<i class="c19">33.75</i>
<i class="c29">48.75</i>
<i class="c36">50.38</i>
<b class="r">10000</b>
<i class="c0">0.00</i>
<i class="c0">0.00</i>
<i class="c0">0.06</i>
<i class="c0">0.19</i>
<i class="c1">0.31</i>
<i class="c2">0.56</i>
<i class="c3">0.94</i>
<i class="c4">1.62</i>
<i class="c4">2.00</i>
<i class="c6">3.25</i>
<i class="c7">4.62</i>
<i class="c8">6.62</i>
<i class="c9">11.62</i>
<i class="c11">14.50</i>
<i class="c14">17.88</i>
<i class="c17">23.12</i>
<i class="c18">28.12</i>
<i class="c19">33.75</i>
<i class="c29">48.75</i>
<i class="c37">49.25</i>
<b class="r">10500</b>
<i class="c0">0.00</i>
<i class="c0">0.00</i>
<i class="c0">0.06</i>
<i class="c0">0.19</i>
<i class="c1">0.31</i>
<i class="c2">0.56</i>
<i class="c3">0.94</i>
<i class="c4">1.62</i>
<i class="c4">2.00</i>
<i class="c6">3.25</i>
<i class="c7">4.62</i>
<i class="c8">6.62</i>
<i class="c9">11.62</i>
<i class="c11">14.50</i>
<i class="c14">17.88</i>
<i class="c17">23.12</i>
<i class="c18">28.12</i>
<i class="c19">33.75</i>
<i class="c29">48.75</i>
<i class="c37">49.00</i>
<b class="r">11000</b>
<i class="c0">0.00</i>
<i class="c0">0.00</i>
<i class="c0">0.06</i>
<i class="c0">0.19</i>
<i class="c1">0.31</i>
<i class="c2">0.56</i>
<i class="c3">0.94</i>
<i class="c4">1.62</i>
<i class="c4">2.00</i>
<i class="c6">3.25</i>
<i class="c7">4.62</i>
<i class="c8">6.62</i>
<i class="c9">11.62</i>
<i class="c11">14.50</i>
<i class="c14">17.88</i>
<i class="c17">23.12</i>
<i class="c18">28.12</i>
<i class="c19">33.75</i>
<i class="c29">48.75</i>
<i class="c29">48.75</i>
</div></div><div id="ttlbg"></div><div id="ttl">Ride by Wire – gear 3-4 – Rain</div></div>
<div id="sb"><svg class="abs" style="right:2px;bottom:2px" width="10" height="10"><g fill="#a0a0a0"><rect x="7" y="7" width="2" height="2"/><rect x="4" y="7" width="2" height="2"/><rect x="1" y="7" width="2" height="2"/><rect x="7" y="4" width="2" height="2"/><rect x="4" y="4" width="2" height="2"/><rect x="7" y="1" width="2" height="2"/></g></svg></div>
</div>
<div id="gw"><div id="gwt">
<svg class="abs" style="left:7px;top:7.5px" width="17" height="13" viewBox="0 0 17 13"><rect x="0.5" y="2.4" width="16" height="8.2" rx="0.8" fill="#000"/><path d="M2.3 0.8V2.6M4.8 0.8V2.6M7.3 0.8V2.6M9.8 0.8V2.6M12.3 0.8V2.6M14.8 0.8V2.6M2.3 10.4V12.2M4.8 10.4V12.2M7.3 10.4V12.2M9.8 10.4V12.2M12.3 10.4V12.2M14.8 10.4V12.2" stroke="#000" stroke-width="1.3"/></svg>
<span>Ride by Wire - gear 3-4 - Rain</span>
<svg class="abs" style="left:700px;top:0" width="129" height="29" viewBox="0 0 129 29" fill="none" stroke="#222" stroke-width="1"><path d="M14.5 13.5H24.5"/><rect x="57.5" y="8.5" width="9" height="9" rx="1.5"/><path d="M101.5 8.5L110.5 17.5M110.5 8.5L101.5 17.5"/></svg>
</div>
<div id="gwm"><span style="left:6.5px">Graph</span><span style="left:51px">View</span></div>
<div id="gtb"><svg class="abs" style="left:0;top:0" width="200" height="25.3" viewBox="407 363.3 200 25.3">
<path d="M410.5 367V386" stroke="#c0c0c0" stroke-width="1"/>
<path d="M420.5 372L430.5 383.5M430.5 372L420.5 383.5" stroke="#f00" stroke-width="1.8" stroke-linecap="round"/>
<path d="M445.5 367V386" stroke="#a8a8a8" stroke-width="1"/><path d="M446.5 367V386" stroke="#fff" stroke-width="1"/>
<rect x="451.5" y="367.5" width="22" height="19.5" fill="#cce4f7" stroke="#a6cff0"/>
<rect x="495.5" y="367.5" width="22" height="19.5" fill="#cce4f7" stroke="#a6cff0"/>
<rect x="539.5" y="367.5" width="22.5" height="19.5" fill="#cce4f7" stroke="#a6cff0"/>
<path d="M462 370L469.5 377.5L462 385L454.5 377.5Z" fill="#000"/><circle cx="462" cy="377.5" r="3.2" fill="#e9e9e9"/><path d="M462 373.5V381.5M458 377.5H466" stroke="#d00" stroke-width="1.2"/>
<path d="M477 384L480 376L484 382L488 373L491 378" stroke="#d00" stroke-width="1.1" fill="none"/><g fill="#22c"><circle cx="480" cy="376" r="1.6"/><circle cx="484" cy="382" r="1.6"/><circle cx="488" cy="373" r="1.6"/><circle cx="491" cy="379" r="1.4"/></g>
<path d="M499.5 370V384.5H515" stroke="#000" stroke-width="1.2" fill="none"/><path d="M500 381L504 376L507 379L511 373L514 377" stroke="#e00" stroke-width="1.3" fill="none"/><path d="M500 379L503 381L507 374L510 378L514 380" stroke="#11c" stroke-width="1.3" fill="none"/>
<path d="M521 383.5L526 376H536L532 383.5ZM526 376L528 372H537L536 376M524 379.5H534.5M529 383.5L532.5 376M531 372L529.5 376M537 372L536 383" stroke="#000" stroke-width="1.1" fill="#fff"/>
<path d="M544 372.5H555" stroke="#e22" stroke-width="1.6"/><path d="M544 375.8H555" stroke="#e8d020" stroke-width="1.6"/><path d="M544 379.1H555" stroke="#2a2" stroke-width="1.6"/><path d="M544 382.4H555" stroke="#22d" stroke-width="1.6"/><path d="M557.5 370V385M555 372L557.5 370M555 384L557.5 385.5" stroke="#000" stroke-width="1.3" fill="none"/>
</svg></div>
<div class="abs" style="left:0;top:71.6px;width:829px;height:469.9px;overflow:hidden"><svg class="chart" style="position:absolute;left:0;top:0" width="829" height="469.9" viewBox="407 388.6 829 469.9" font-family="Liberation Sans, sans-serif">
<g stroke="#808080" stroke-width="1" fill="none">
<line x1="636.2" y1="480.9" x2="872.0" y2="416.4" />
<line x1="872.0" y1="416.4" x2="1006.1" y2="530.8" />
<line x1="636.2" y1="480.9" x2="636.2" y2="718.2" />
<line x1="872.0" y1="416.4" x2="872.0" y2="653.8" />
<line x1="770.3" y1="832.6" x2="636.2" y2="718.2" />
</g>
<g stroke="#b4b4b4" stroke-width="1.2" fill="none">
<line x1="770.3" y1="832.6" x2="1006.1" y2="768.1" />
<line x1="1006.1" y1="530.8" x2="1006.1" y2="768.1" />
</g>
<g stroke="#707070" stroke-width="1" stroke-dasharray="3 3" fill="none">
<line x1="636.2" y1="670.8" x2="872.0" y2="606.3" />
<line x1="872.0" y1="606.3" x2="1006.1" y2="720.6" />
<line x1="636.2" y1="623.3" x2="872.0" y2="558.8" />
<line x1="872.0" y1="558.8" x2="1006.1" y2="673.2" />
<line x1="636.2" y1="575.8" x2="872.0" y2="511.3" />
<line x1="872.0" y1="511.3" x2="1006.1" y2="625.7" />
<line x1="636.2" y1="528.4" x2="872.0" y2="463.9" />
<line x1="872.0" y1="463.9" x2="1006.1" y2="578.2" />
</g>
<g stroke="#808080" stroke-width="0.8">
<line x1="770.3" y1="832.6" x2="768.8" y2="835.6"/>
<line x1="772.3" y1="832.1" x2="770.8" y2="835.1"/>
<line x1="775.1" y1="831.3" x2="773.6" y2="834.3"/>
<line x1="780.2" y1="829.9" x2="778.7" y2="832.9"/>
<line x1="784.2" y1="828.8" x2="782.7" y2="831.8"/>
<line x1="792.1" y1="826.6" x2="790.6" y2="829.6"/>
<line x1="800.0" y1="824.5" x2="798.5" y2="827.5"/>
<line x1="808.0" y1="822.3" x2="806.5" y2="825.3"/>
<line x1="811.9" y1="821.2" x2="810.4" y2="824.2"/>
<line x1="823.8" y1="818.0" x2="822.3" y2="821.0"/>
<line x1="835.7" y1="814.7" x2="834.2" y2="817.7"/>
<line x1="847.6" y1="811.5" x2="846.1" y2="814.5"/>
<line x1="867.4" y1="806.0" x2="865.9" y2="809.0"/>
<line x1="879.3" y1="802.8" x2="877.8" y2="805.8"/>
<line x1="891.2" y1="799.5" x2="889.7" y2="802.5"/>
<line x1="911.0" y1="794.1" x2="909.5" y2="797.1"/>
<line x1="930.8" y1="788.7" x2="929.3" y2="791.7"/>
<line x1="950.6" y1="783.3" x2="949.1" y2="786.3"/>
<line x1="990.3" y1="772.4" x2="988.8" y2="775.4"/>
<line x1="1006.1" y1="768.1" x2="1004.6" y2="771.1"/>
<line x1="770.3" y1="832.6" x2="767.3" y2="833.6"/>
<line x1="760.5" y1="824.3" x2="757.5" y2="825.3"/>
<line x1="760.4" y1="824.2" x2="757.4" y2="825.2"/>
<line x1="758.1" y1="822.2" x2="755.1" y2="823.2"/>
<line x1="756.9" y1="821.2" x2="753.9" y2="822.2"/>
<line x1="755.7" y1="820.1" x2="752.7" y2="821.1"/>
<line x1="753.2" y1="818.0" x2="750.2" y2="819.0"/>
<line x1="750.8" y1="816.0" x2="747.8" y2="817.0"/>
<line x1="748.4" y1="813.9" x2="745.4" y2="814.9"/>
<line x1="745.9" y1="811.8" x2="742.9" y2="812.8"/>
<line x1="742.9" y1="809.2" x2="739.9" y2="810.2"/>
<line x1="739.8" y1="806.6" x2="736.8" y2="807.6"/>
<line x1="736.8" y1="804.0" x2="733.8" y2="805.0"/>
<line x1="733.7" y1="801.4" x2="730.7" y2="802.4"/>
<line x1="730.7" y1="798.8" x2="727.7" y2="799.8"/>
<line x1="727.6" y1="796.2" x2="724.6" y2="797.2"/>
<line x1="724.6" y1="793.6" x2="721.6" y2="794.6"/>
<line x1="721.5" y1="791.0" x2="718.5" y2="792.0"/>
<line x1="715.4" y1="785.8" x2="712.4" y2="786.8"/>
<line x1="709.3" y1="780.6" x2="706.3" y2="781.6"/>
<line x1="703.2" y1="775.4" x2="700.2" y2="776.4"/>
<line x1="697.2" y1="770.2" x2="694.2" y2="771.2"/>
<line x1="691.1" y1="765.0" x2="688.1" y2="766.0"/>
<line x1="685.0" y1="759.8" x2="682.0" y2="760.8"/>
<line x1="678.9" y1="754.6" x2="675.9" y2="755.6"/>
<line x1="672.8" y1="749.4" x2="669.8" y2="750.4"/>
<line x1="666.7" y1="744.2" x2="663.7" y2="745.2"/>
<line x1="660.6" y1="739.0" x2="657.6" y2="740.0"/>
<line x1="654.5" y1="733.8" x2="651.5" y2="734.8"/>
<line x1="648.4" y1="728.6" x2="645.4" y2="729.6"/>
<line x1="642.3" y1="723.4" x2="639.3" y2="724.4"/>
<line x1="636.2" y1="718.2" x2="633.2" y2="719.2"/>
</g>
<g stroke="#000" stroke-width="0.75" stroke-linejoin="round">
<polygon points="862.2,466.3 878.1,461 872,456.8 856.2,461.1" fill="#ffac00"/>
<polygon points="822.6,537.8 862.2,466.3 856.2,461.1 816.5,532.6" fill="#ceff00"/>
<polygon points="802.8,565.9 822.6,537.8 816.5,532.6 796.7,560.7" fill="#1bff00"/>
<polygon points="783,591.6 802.8,565.9 796.7,560.7 776.9,586.4" fill="#00ff41"/>
<polygon points="763.2,618.1 783,591.6 776.9,586.4 757.1,613" fill="#00ff9a"/>
<polygon points="751.3,635.1 763.2,618.1 757.1,613 745.2,629.9" fill="#00ffe4"/>
<polygon points="739.4,649.9 751.3,635.1 745.2,629.9 733.3,644.7" fill="#00e2ff"/>
<polygon points="719.6,675.6 739.4,649.9 733.3,644.7 713.5,670.4" fill="#009eff"/>
<polygon points="707.7,686.9 719.6,675.6 713.5,670.4 701.6,681.7" fill="#0061ff"/>
<polygon points="695.8,695.7 707.7,686.9 701.6,681.7 689.7,690.5" fill="#0044ff"/>
<polygon points="683.9,704 695.8,695.7 689.7,690.5 677.8,698.8" fill="#002dff"/>
<polygon points="680,706.6 683.9,704 677.8,698.8 673.9,701.4" fill="#001fff"/>
<polygon points="672,711.5 680,706.6 673.9,701.4 665.9,706.3" fill="#0016ff"/>
<polygon points="664.1,715.2 672,711.5 665.9,706.3 658,710" fill="#000dff"/>
<polygon points="656.2,718.4 664.1,715.2 658,710 650.1,713.2" fill="#0007ff"/>
<polygon points="652.2,720 656.2,718.4 650.1,713.2 646.1,714.8" fill="#0004ff"/>
<polygon points="647.1,721.9 652.2,720 646.1,714.8 641,716.7" fill="#0002ff"/>
<polygon points="644.3,722.9 647.1,721.9 641,716.7 638.2,717.7" fill="#0000ff"/>
<polygon points="642.3,723.4 644.3,722.9 638.2,717.7 636.2,718.2" fill="#0000ff"/>
<polygon points="868.3,471.5 884.2,465.2 878.1,461 862.2,466.3" fill="#ffaa00"/>
<polygon points="828.7,543 868.3,471.5 862.2,466.3 822.6,537.8" fill="#ceff00"/>
<polygon points="808.9,571.1 828.7,543 822.6,537.8 802.8,565.9" fill="#1bff00"/>
<polygon points="789.1,596.8 808.9,571.1 802.8,565.9 783,591.6" fill="#00ff41"/>
<polygon points="769.3,623.3 789.1,596.8 783,591.6 763.2,618.1" fill="#00ff9a"/>
<polygon points="757.4,640.3 769.3,623.3 763.2,618.1 751.3,635.1" fill="#00ffe4"/>
<polygon points="745.5,655.1 757.4,640.3 751.3,635.1 739.4,649.9" fill="#00e2ff"/>
<polygon points="725.7,680.8 745.5,655.1 739.4,649.9 719.6,675.6" fill="#009eff"/>
<polygon points="713.8,692.1 725.7,680.8 719.6,675.6 707.7,686.9" fill="#0061ff"/>
<polygon points="701.9,700.9 713.8,692.1 707.7,686.9 695.8,695.7" fill="#0044ff"/>
<polygon points="690,709.2 701.9,700.9 695.8,695.7 683.9,704" fill="#002dff"/>
<polygon points="686,711.8 690,709.2 683.9,704 680,706.6" fill="#001fff"/>
<polygon points="678.1,716.7 686,711.8 680,706.6 672,711.5" fill="#0016ff"/>
<polygon points="670.2,720.4 678.1,716.7 672,711.5 664.1,715.2" fill="#000dff"/>
<polygon points="662.3,723.6 670.2,720.4 664.1,715.2 656.2,718.4" fill="#0007ff"/>
<polygon points="658.3,725.2 662.3,723.6 656.2,718.4 652.2,720" fill="#0004ff"/>
<polygon points="653.2,727.1 658.3,725.2 652.2,720 647.1,721.9" fill="#0002ff"/>
<polygon points="650.4,728.1 653.2,727.1 647.1,721.9 644.3,722.9" fill="#0000ff"/>
<polygon points="648.4,728.6 650.4,728.1 644.3,722.9 642.3,723.4" fill="#0000ff"/>
<polygon points="874.4,476.7 890.3,465.8 884.2,465.2 868.3,471.5" fill="#ffa400"/>
<polygon points="834.8,548.2 874.4,476.7 868.3,471.5 828.7,543" fill="#ceff00"/>
<polygon points="815,576.3 834.8,548.2 828.7,543 808.9,571.1" fill="#1bff00"/>
<polygon points="795.2,602 815,576.3 808.9,571.1 789.1,596.8" fill="#00ff41"/>
<polygon points="775.4,628.5 795.2,602 789.1,596.8 769.3,623.3" fill="#00ff9a"/>
<polygon points="763.5,645.5 775.4,628.5 769.3,623.3 757.4,640.3" fill="#00ffe4"/>
<polygon points="751.6,660.3 763.5,645.5 757.4,640.3 745.5,655.1" fill="#00e2ff"/>
<polygon points="731.8,686 751.6,660.3 745.5,655.1 725.7,680.8" fill="#009eff"/>
<polygon points="719.9,697.3 731.8,686 725.7,680.8 713.8,692.1" fill="#0061ff"/>
<polygon points="708,706.1 719.9,697.3 713.8,692.1 701.9,700.9" fill="#0044ff"/>
<polygon points="696.1,714.4 708,706.1 701.9,700.9 690,709.2" fill="#002dff"/>
<polygon points="692.1,717 696.1,714.4 690,709.2 686,711.8" fill="#001fff"/>
<polygon points="684.2,721.9 692.1,717 686,711.8 678.1,716.7" fill="#0016ff"/>
<polygon points="676.3,725.6 684.2,721.9 678.1,716.7 670.2,720.4" fill="#000dff"/>
<polygon points="668.4,728.8 676.3,725.6 670.2,720.4 662.3,723.6" fill="#0007ff"/>
<polygon points="664.4,730.4 668.4,728.8 662.3,723.6 658.3,725.2" fill="#0004ff"/>
<polygon points="659.2,732.3 664.4,730.4 658.3,725.2 653.2,727.1" fill="#0002ff"/>
<polygon points="656.5,733.3 659.2,732.3 653.2,727.1 650.4,728.1" fill="#0000ff"/>
<polygon points="654.5,733.8 656.5,733.3 650.4,728.1 648.4,728.6" fill="#0000ff"/>
<polygon points="880.5,481.9 896.4,470.5 890.3,465.8 874.4,476.7" fill="#ff9e00"/>
<polygon points="840.9,553.4 880.5,481.9 874.4,476.7 834.8,548.2" fill="#ceff00"/>
<polygon points="821.1,581.5 840.9,553.4 834.8,548.2 815,576.3" fill="#1bff00"/>
<polygon points="801.3,607.2 821.1,581.5 815,576.3 795.2,602" fill="#00ff41"/>
<polygon points="781.5,633.7 801.3,607.2 795.2,602 775.4,628.5" fill="#00ff9a"/>
<polygon points="769.6,650.6 781.5,633.7 775.4,628.5 763.5,645.5" fill="#00ffe4"/>
<polygon points="757.7,665.5 769.6,650.6 763.5,645.5 751.6,660.3" fill="#00e2ff"/>
<polygon points="737.9,691.2 757.7,665.5 751.6,660.3 731.8,686" fill="#009eff"/>
<polygon points="726,702.5 737.9,691.2 731.8,686 719.9,697.3" fill="#0061ff"/>
<polygon points="714.1,711.3 726,702.5 719.9,697.3 708,706.1" fill="#0044ff"/>
<polygon points="702.2,719.6 714.1,711.3 708,706.1 696.1,714.4" fill="#002dff"/>
<polygon points="698.2,722.2 702.2,719.6 696.1,714.4 692.1,717" fill="#001fff"/>
<polygon points="690.3,727.1 698.2,722.2 692.1,717 684.2,721.9" fill="#0016ff"/>
<polygon points="682.4,730.8 690.3,727.1 684.2,721.9 676.3,725.6" fill="#000dff"/>
<polygon points="674.4,734 682.4,730.8 676.3,725.6 668.4,728.8" fill="#0007ff"/>
<polygon points="670.5,735.6 674.4,734 668.4,728.8 664.4,730.4" fill="#0004ff"/>
<polygon points="665.3,737.5 670.5,735.6 664.4,730.4 659.2,732.3" fill="#0002ff"/>
<polygon points="662.6,738.5 665.3,737.5 659.2,732.3 656.5,733.3" fill="#0000ff"/>
<polygon points="660.6,739 662.6,738.5 656.5,733.3 654.5,733.8" fill="#0000ff"/>
<polygon points="886.6,487.1 902.5,472.7 896.4,470.5 880.5,481.9" fill="#ff9b00"/>
<polygon points="847,558.6 886.6,487.1 880.5,481.9 840.9,553.4" fill="#ceff00"/>
<polygon points="827.2,586.7 847,558.6 840.9,553.4 821.1,581.5" fill="#1bff00"/>
<polygon points="807.4,612.4 827.2,586.7 821.1,581.5 801.3,607.2" fill="#00ff41"/>
<polygon points="787.5,638.9 807.4,612.4 801.3,607.2 781.5,633.7" fill="#00ff9a"/>
<polygon points="775.7,655.8 787.5,638.9 781.5,633.7 769.6,650.6" fill="#00ffe4"/>
<polygon points="763.8,670.7 775.7,655.8 769.6,650.6 757.7,665.5" fill="#00e2ff"/>
<polygon points="743.9,696.4 763.8,670.7 757.7,665.5 737.9,691.2" fill="#009eff"/>
<polygon points="732.1,707.7 743.9,696.4 737.9,691.2 726,702.5" fill="#0061ff"/>
<polygon points="720.2,716.5 732.1,707.7 726,702.5 714.1,711.3" fill="#0044ff"/>
<polygon points="708.3,724.8 720.2,716.5 714.1,711.3 702.2,719.6" fill="#002dff"/>
<polygon points="704.3,727.4 708.3,724.8 702.2,719.6 698.2,722.2" fill="#001fff"/>
<polygon points="696.4,732.3 704.3,727.4 698.2,722.2 690.3,727.1" fill="#0016ff"/>
<polygon points="688.5,736 696.4,732.3 690.3,727.1 682.4,730.8" fill="#000dff"/>
<polygon points="680.5,739.2 688.5,736 682.4,730.8 674.4,734" fill="#0007ff"/>
<polygon points="676.6,740.8 680.5,739.2 674.4,734 670.5,735.6" fill="#0004ff"/>
<polygon points="671.4,742.7 676.6,740.8 670.5,735.6 665.3,737.5" fill="#0002ff"/>
<polygon points="668.7,743.7 671.4,742.7 665.3,737.5 662.6,738.5" fill="#0000ff"/>
<polygon points="666.7,744.2 668.7,743.7 662.6,738.5 660.6,739" fill="#0000ff"/>
<polygon points="892.7,492.3 908.6,470.3 902.5,472.7 886.6,487.1" fill="#ff8f00"/>
<polygon points="853.1,563.8 892.7,492.3 886.6,487.1 847,558.6" fill="#ceff00"/>
<polygon points="833.3,591.9 853.1,563.8 847,558.6 827.2,586.7" fill="#1bff00"/>
<polygon points="813.5,617.6 833.3,591.9 827.2,586.7 807.4,612.4" fill="#00ff41"/>
<polygon points="793.6,644.1 813.5,617.6 807.4,612.4 787.5,638.9" fill="#00ff9a"/>
<polygon points="781.8,661 793.6,644.1 787.5,638.9 775.7,655.8" fill="#00ffe4"/>
<polygon points="769.9,675.9 781.8,661 775.7,655.8 763.8,670.7" fill="#00e2ff"/>
<polygon points="750,701.6 769.9,675.9 763.8,670.7 743.9,696.4" fill="#009eff"/>
<polygon points="738.2,712.9 750,701.6 743.9,696.4 732.1,707.7" fill="#0061ff"/>
<polygon points="726.3,721.7 738.2,712.9 732.1,707.7 720.2,716.5" fill="#0044ff"/>
<polygon points="714.4,730 726.3,721.7 720.2,716.5 708.3,724.8" fill="#002dff"/>
<polygon points="710.4,732.6 714.4,730 708.3,724.8 704.3,727.4" fill="#001fff"/>
<polygon points="702.5,737.5 710.4,732.6 704.3,727.4 696.4,732.3" fill="#0016ff"/>
<polygon points="694.6,741.2 702.5,737.5 696.4,732.3 688.5,736" fill="#000dff"/>
<polygon points="686.6,744.4 694.6,741.2 688.5,736 680.5,739.2" fill="#0007ff"/>
<polygon points="682.7,746 686.6,744.4 680.5,739.2 676.6,740.8" fill="#0004ff"/>
<polygon points="677.5,747.9 682.7,746 676.6,740.8 671.4,742.7" fill="#0002ff"/>
<polygon points="674.8,748.9 677.5,747.9 671.4,742.7 668.7,743.7" fill="#0000ff"/>
<polygon points="672.8,749.4 674.8,748.9 668.7,743.7 666.7,744.2" fill="#0000ff"/>
<polygon points="898.8,497.5 914.7,460.3 908.6,470.3 892.7,492.3" fill="#ff7700"/>
<polygon points="859.2,569 898.8,497.5 892.7,492.3 853.1,563.8" fill="#ceff00"/>
<polygon points="839.4,597.1 859.2,569 853.1,563.8 833.3,591.9" fill="#1bff00"/>
<polygon points="819.5,622.7 839.4,597.1 833.3,591.9 813.5,617.6" fill="#00ff41"/>
<polygon points="799.7,649.3 819.5,622.7 813.5,617.6 793.6,644.1" fill="#00ff9a"/>
<polygon points="787.9,666.2 799.7,649.3 793.6,644.1 781.8,661" fill="#00ffe4"/>
<polygon points="776,681.1 787.9,666.2 781.8,661 769.9,675.9" fill="#00e2ff"/>
<polygon points="756.1,706.8 776,681.1 769.9,675.9 750,701.6" fill="#009eff"/>
<polygon points="744.3,718.1 756.1,706.8 750,701.6 738.2,712.9" fill="#0061ff"/>
<polygon points="732.4,726.9 744.3,718.1 738.2,712.9 726.3,721.7" fill="#0044ff"/>
<polygon points="720.5,735.2 732.4,726.9 726.3,721.7 714.4,730" fill="#002dff"/>
<polygon points="716.5,737.8 720.5,735.2 714.4,730 710.4,732.6" fill="#001fff"/>
<polygon points="708.6,742.7 716.5,737.8 710.4,732.6 702.5,737.5" fill="#0016ff"/>
<polygon points="700.7,746.4 708.6,742.7 702.5,737.5 694.6,741.2" fill="#000dff"/>
<polygon points="692.7,749.6 700.7,746.4 694.6,741.2 686.6,744.4" fill="#0007ff"/>
<polygon points="688.8,751.2 692.7,749.6 686.6,744.4 682.7,746" fill="#0004ff"/>
<polygon points="683.6,753.1 688.8,751.2 682.7,746 677.5,747.9" fill="#0002ff"/>
<polygon points="680.8,754.1 683.6,753.1 677.5,747.9 674.8,748.9" fill="#0000ff"/>
<polygon points="678.9,754.6 680.8,754.1 674.8,748.9 672.8,749.4" fill="#0000ff"/>
<polygon points="904.9,502.7 920.8,458 914.7,460.3 898.8,497.5" fill="#ff5e00"/>
<polygon points="865.3,574.2 904.9,502.7 898.8,497.5 859.2,569" fill="#ceff00"/>
<polygon points="845.5,602.3 865.3,574.2 859.2,569 839.4,597.1" fill="#1bff00"/>
<polygon points="825.6,627.9 845.5,602.3 839.4,597.1 819.5,622.7" fill="#00ff41"/>
<polygon points="805.8,654.5 825.6,627.9 819.5,622.7 799.7,649.3" fill="#00ff9a"/>
<polygon points="794,671.4 805.8,654.5 799.7,649.3 787.9,666.2" fill="#00ffe4"/>
<polygon points="782.1,686.3 794,671.4 787.9,666.2 776,681.1" fill="#00e2ff"/>
<polygon points="762.2,712 782.1,686.3 776,681.1 756.1,706.8" fill="#009eff"/>
<polygon points="750.4,723.3 762.2,712 756.1,706.8 744.3,718.1" fill="#0061ff"/>
<polygon points="738.5,732.1 750.4,723.3 744.3,718.1 732.4,726.9" fill="#0044ff"/>
<polygon points="726.6,740.4 738.5,732.1 732.4,726.9 720.5,735.2" fill="#002dff"/>
<polygon points="722.6,743 726.6,740.4 720.5,735.2 716.5,737.8" fill="#001fff"/>
<polygon points="714.7,747.9 722.6,743 716.5,737.8 708.6,742.7" fill="#0016ff"/>
<polygon points="706.8,751.6 714.7,747.9 708.6,742.7 700.7,746.4" fill="#000dff"/>
<polygon points="698.8,754.8 706.8,751.6 700.7,746.4 692.7,749.6" fill="#0007ff"/>
<polygon points="694.9,756.4 698.8,754.8 692.7,749.6 688.8,751.2" fill="#0004ff"/>
<polygon points="689.7,758.3 694.9,756.4 688.8,751.2 683.6,753.1" fill="#0002ff"/>
<polygon points="686.9,759.3 689.7,758.3 683.6,753.1 680.8,754.1" fill="#0000ff"/>
<polygon points="685,759.8 686.9,759.3 680.8,754.1 678.9,754.6" fill="#0000ff"/>
<polygon points="911,507.9 926.9,473.3 920.8,458 904.9,502.7" fill="#ff6100"/>
<polygon points="871.4,579.4 911,507.9 904.9,502.7 865.3,574.2" fill="#ceff00"/>
<polygon points="851.6,607.5 871.4,579.4 865.3,574.2 845.5,602.3" fill="#1bff00"/>
<polygon points="831.7,633.1 851.6,607.5 845.5,602.3 825.6,627.9" fill="#00ff41"/>
<polygon points="811.9,659.7 831.7,633.1 825.6,627.9 805.8,654.5" fill="#00ff9a"/>
<polygon points="800,676.6 811.9,659.7 805.8,654.5 794,671.4" fill="#00ffe4"/>
<polygon points="788.2,691.5 800,676.6 794,671.4 782.1,686.3" fill="#00e2ff"/>
<polygon points="768.3,717.1 788.2,691.5 782.1,686.3 762.2,712" fill="#009eff"/>
<polygon points="756.4,728.5 768.3,717.1 762.2,712 750.4,723.3" fill="#0061ff"/>
<polygon points="744.6,737.3 756.4,728.5 750.4,723.3 738.5,732.1" fill="#0044ff"/>
<polygon points="732.7,745.6 744.6,737.3 738.5,732.1 726.6,740.4" fill="#002dff"/>
<polygon points="728.7,748.2 732.7,745.6 726.6,740.4 722.6,743" fill="#001fff"/>
<polygon points="720.8,753.1 728.7,748.2 722.6,743 714.7,747.9" fill="#0016ff"/>
<polygon points="712.8,756.8 720.8,753.1 714.7,747.9 706.8,751.6" fill="#000dff"/>
<polygon points="704.9,760 712.8,756.8 706.8,751.6 698.8,754.8" fill="#0007ff"/>
<polygon points="701,761.6 704.9,760 698.8,754.8 694.9,756.4" fill="#0004ff"/>
<polygon points="695.8,763.5 701,761.6 694.9,756.4 689.7,758.3" fill="#0002ff"/>
<polygon points="693,764.5 695.8,763.5 689.7,758.3 686.9,759.3" fill="#0000ff"/>
<polygon points="691.1,765 693,764.5 686.9,759.3 685,759.8" fill="#0000ff"/>
<polygon points="917.1,513.1 933,493.6 926.9,473.3 911,507.9" fill="#ff7c00"/>
<polygon points="877.5,584.6 917.1,513.1 911,507.9 871.4,579.4" fill="#ceff00"/>
<polygon points="857.7,612.7 877.5,584.6 871.4,579.4 851.6,607.5" fill="#1bff00"/>
<polygon points="837.8,638.3 857.7,612.7 851.6,607.5 831.7,633.1" fill="#00ff41"/>
<polygon points="818,664.9 837.8,638.3 831.7,633.1 811.9,659.7" fill="#00ff9a"/>
<polygon points="806.1,681.8 818,664.9 811.9,659.7 800,676.6" fill="#00ffe4"/>
<polygon points="794.3,696.7 806.1,681.8 800,676.6 788.2,691.5" fill="#00e2ff"/>
<polygon points="774.4,722.3 794.3,696.7 788.2,691.5 768.3,717.1" fill="#009eff"/>
<polygon points="762.5,733.7 774.4,722.3 768.3,717.1 756.4,728.5" fill="#0061ff"/>
<polygon points="750.7,742.5 762.5,733.7 756.4,728.5 744.6,737.3" fill="#0044ff"/>
<polygon points="738.8,750.8 750.7,742.5 744.6,737.3 732.7,745.6" fill="#002dff"/>
<polygon points="734.8,753.4 738.8,750.8 732.7,745.6 728.7,748.2" fill="#001fff"/>
<polygon points="726.9,758.3 734.8,753.4 728.7,748.2 720.8,753.1" fill="#0016ff"/>
<polygon points="718.9,762 726.9,758.3 720.8,753.1 712.8,756.8" fill="#000dff"/>
<polygon points="711,765.2 718.9,762 712.8,756.8 704.9,760" fill="#0007ff"/>
<polygon points="707.1,766.8 711,765.2 704.9,760 701,761.6" fill="#0004ff"/>
<polygon points="701.9,768.7 707.1,766.8 701,761.6 695.8,763.5" fill="#0002ff"/>
<polygon points="699.1,769.7 701.9,768.7 695.8,763.5 693,764.5" fill="#0000ff"/>
<polygon points="697.2,770.2 699.1,769.7 693,764.5 691.1,765" fill="#0000ff"/>
<polygon points="923.2,528.4 939,524.1 933,493.6 917.1,513.1" fill="#ffb300"/>
<polygon points="883.6,589.8 923.2,528.4 917.1,513.1 877.5,584.6" fill="#c3ff00"/>
<polygon points="863.8,617.9 883.6,589.8 877.5,584.6 857.7,612.7" fill="#1bff00"/>
<polygon points="843.9,643.5 863.8,617.9 857.7,612.7 837.8,638.3" fill="#00ff41"/>
<polygon points="824.1,670.1 843.9,643.5 837.8,638.3 818,664.9" fill="#00ff9a"/>
<polygon points="812.2,687 824.1,670.1 818,664.9 806.1,681.8" fill="#00ffe4"/>
<polygon points="800.4,701.9 812.2,687 806.1,681.8 794.3,696.7" fill="#00e2ff"/>
<polygon points="780.5,727.5 800.4,701.9 794.3,696.7 774.4,722.3" fill="#009eff"/>
<polygon points="768.6,738.9 780.5,727.5 774.4,722.3 762.5,733.7" fill="#0061ff"/>
<polygon points="756.8,747.7 768.6,738.9 762.5,733.7 750.7,742.5" fill="#0044ff"/>
<polygon points="744.9,756 756.8,747.7 750.7,742.5 738.8,750.8" fill="#002dff"/>
<polygon points="740.9,758.6 744.9,756 738.8,750.8 734.8,753.4" fill="#001fff"/>
<polygon points="733,763.5 740.9,758.6 734.8,753.4 726.9,758.3" fill="#0016ff"/>
<polygon points="725,767.2 733,763.5 726.9,758.3 718.9,762" fill="#000dff"/>
<polygon points="717.1,770.4 725,767.2 718.9,762 711,765.2" fill="#0007ff"/>
<polygon points="713.2,771.9 717.1,770.4 711,765.2 707.1,766.8" fill="#0004ff"/>
<polygon points="708,773.9 713.2,771.9 707.1,766.8 701.9,768.7" fill="#0002ff"/>
<polygon points="705.2,774.9 708,773.9 701.9,768.7 699.1,769.7" fill="#0000ff"/>
<polygon points="703.2,775.4 705.2,774.9 699.1,769.7 697.2,770.2" fill="#0000ff"/>
<polygon points="929.3,553.8 945.1,549.5 939,524.1 923.2,528.4" fill="#f9ff00"/>
<polygon points="889.7,594.9 929.3,553.8 923.2,528.4 883.6,589.8" fill="#a2ff00"/>
<polygon points="869.9,623.1 889.7,594.9 883.6,589.8 863.8,617.9" fill="#1bff00"/>
<polygon points="850,648.7 869.9,623.1 863.8,617.9 843.9,643.5" fill="#00ff41"/>
<polygon points="830.2,675.3 850,648.7 843.9,643.5 824.1,670.1" fill="#00ff9a"/>
<polygon points="818.3,692.2 830.2,675.3 824.1,670.1 812.2,687" fill="#00ffe4"/>
<polygon points="806.4,707.1 818.3,692.2 812.2,687 800.4,701.9" fill="#00e2ff"/>
<polygon points="786.6,732.7 806.4,707.1 800.4,701.9 780.5,727.5" fill="#009eff"/>
<polygon points="774.7,744.1 786.6,732.7 780.5,727.5 768.6,738.9" fill="#0061ff"/>
<polygon points="762.8,752.9 774.7,744.1 768.6,738.9 756.8,747.7" fill="#0044ff"/>
<polygon points="751,761.2 762.8,752.9 756.8,747.7 744.9,756" fill="#002dff"/>
<polygon points="747,763.8 751,761.2 744.9,756 740.9,758.6" fill="#001fff"/>
<polygon points="739.1,768.7 747,763.8 740.9,758.6 733,763.5" fill="#0016ff"/>
<polygon points="731.1,772.4 739.1,768.7 733,763.5 725,767.2" fill="#000dff"/>
<polygon points="723.2,775.6 731.1,772.4 725,767.2 717.1,770.4" fill="#0007ff"/>
<polygon points="719.2,777.1 723.2,775.6 717.1,770.4 713.2,771.9" fill="#0004ff"/>
<polygon points="714.1,779.1 719.2,777.1 713.2,771.9 708,773.9" fill="#0002ff"/>
<polygon points="711.3,780.1 714.1,779.1 708,773.9 705.2,774.9" fill="#0000ff"/>
<polygon points="709.3,780.6 711.3,780.1 705.2,774.9 703.2,775.4" fill="#0000ff"/>
<polygon points="935.4,566.6 951.2,562.2 945.1,549.5 929.3,553.8" fill="#bdff00"/>
<polygon points="895.8,600.1 935.4,566.6 929.3,553.8 889.7,594.9" fill="#84ff00"/>
<polygon points="875.9,628.3 895.8,600.1 889.7,594.9 869.9,623.1" fill="#1bff00"/>
<polygon points="856.1,653.9 875.9,628.3 869.9,623.1 850,648.7" fill="#00ff41"/>
<polygon points="836.3,680.5 856.1,653.9 850,648.7 830.2,675.3" fill="#00ff9a"/>
<polygon points="824.4,697.4 836.3,680.5 830.2,675.3 818.3,692.2" fill="#00ffe4"/>
<polygon points="812.5,712.3 824.4,697.4 818.3,692.2 806.4,707.1" fill="#00e2ff"/>
<polygon points="792.7,737.9 812.5,712.3 806.4,707.1 786.6,732.7" fill="#009eff"/>
<polygon points="780.8,749.3 792.7,737.9 786.6,732.7 774.7,744.1" fill="#0061ff"/>
<polygon points="768.9,758.1 780.8,749.3 774.7,744.1 762.8,752.9" fill="#0044ff"/>
<polygon points="757.1,766.4 768.9,758.1 762.8,752.9 751,761.2" fill="#002dff"/>
<polygon points="753.1,769 757.1,766.4 751,761.2 747,763.8" fill="#001fff"/>
<polygon points="745.2,773.9 753.1,769 747,763.8 739.1,768.7" fill="#0016ff"/>
<polygon points="737.2,777.6 745.2,773.9 739.1,768.7 731.1,772.4" fill="#000dff"/>
<polygon points="729.3,780.8 737.2,777.6 731.1,772.4 723.2,775.6" fill="#0007ff"/>
<polygon points="725.3,782.3 729.3,780.8 723.2,775.6 719.2,777.1" fill="#0004ff"/>
<polygon points="720.2,784.3 725.3,782.3 719.2,777.1 714.1,779.1" fill="#0002ff"/>
<polygon points="717.4,785.3 720.2,784.3 714.1,779.1 711.3,780.1" fill="#0000ff"/>
<polygon points="715.4,785.8 717.4,785.3 711.3,780.1 709.3,780.6" fill="#0000ff"/>
<polygon points="941.5,576.1 957.3,571.7 951.2,562.2 935.4,566.6" fill="#a4ff00"/>
<polygon points="901.9,605.3 941.5,576.1 935.4,566.6 895.8,600.1" fill="#78ff00"/>
<polygon points="882,633.5 901.9,605.3 895.8,600.1 875.9,628.3" fill="#1bff00"/>
<polygon points="862.2,659.1 882,633.5 875.9,628.3 856.1,653.9" fill="#00ff41"/>
<polygon points="842.4,685.7 862.2,659.1 856.1,653.9 836.3,680.5" fill="#00ff9a"/>
<polygon points="830.5,702.6 842.4,685.7 836.3,680.5 824.4,697.4" fill="#00ffe4"/>
<polygon points="818.6,717.5 830.5,702.6 824.4,697.4 812.5,712.3" fill="#00e2ff"/>
<polygon points="798.8,743.1 818.6,717.5 812.5,712.3 792.7,737.9" fill="#009eff"/>
<polygon points="786.9,754.5 798.8,743.1 792.7,737.9 780.8,749.3" fill="#0061ff"/>
<polygon points="775,763.3 786.9,754.5 780.8,749.3 768.9,758.1" fill="#0044ff"/>
<polygon points="763.2,771.6 775,763.3 768.9,758.1 757.1,766.4" fill="#002dff"/>
<polygon points="759.2,774.2 763.2,771.6 757.1,766.4 753.1,769" fill="#001fff"/>
<polygon points="751.3,779.1 759.2,774.2 753.1,769 745.2,773.9" fill="#0016ff"/>
<polygon points="743.3,782.8 751.3,779.1 745.2,773.9 737.2,777.6" fill="#000dff"/>
<polygon points="735.4,786 743.3,782.8 737.2,777.6 729.3,780.8" fill="#0007ff"/>
<polygon points="731.4,787.5 735.4,786 729.3,780.8 725.3,782.3" fill="#0004ff"/>
<polygon points="726.3,789.5 731.4,787.5 725.3,782.3 720.2,784.3" fill="#0002ff"/>
<polygon points="723.5,790.5 726.3,789.5 720.2,784.3 717.4,785.3" fill="#0000ff"/>
<polygon points="721.5,791 723.5,790.5 717.4,785.3 715.4,785.8" fill="#0000ff"/>
<polygon points="944.5,580.7 960.4,576.4 957.3,571.7 941.5,576.1" fill="#96ff00"/>
<polygon points="904.9,607.9 944.5,580.7 941.5,576.1 901.9,605.3" fill="#71ff00"/>
<polygon points="885.1,636.1 904.9,607.9 901.9,605.3 882,633.5" fill="#1bff00"/>
<polygon points="865.3,661.7 885.1,636.1 882,633.5 862.2,659.1" fill="#00ff41"/>
<polygon points="845.5,688.3 865.3,661.7 862.2,659.1 842.4,685.7" fill="#00ff9a"/>
<polygon points="833.6,705.2 845.5,688.3 842.4,685.7 830.5,702.6" fill="#00ffe4"/>
<polygon points="821.7,720.1 833.6,705.2 830.5,702.6 818.6,717.5" fill="#00e2ff"/>
<polygon points="801.9,745.7 821.7,720.1 818.6,717.5 798.8,743.1" fill="#009eff"/>
<polygon points="790,757.1 801.9,745.7 798.8,743.1 786.9,754.5" fill="#0061ff"/>
<polygon points="778.1,765.9 790,757.1 786.9,754.5 775,763.3" fill="#0044ff"/>
<polygon points="766.2,774.2 778.1,765.9 775,763.3 763.2,771.6" fill="#002dff"/>
<polygon points="762.2,776.8 766.2,774.2 763.2,771.6 759.2,774.2" fill="#001fff"/>
<polygon points="754.3,781.7 762.2,776.8 759.2,774.2 751.3,779.1" fill="#0016ff"/>
<polygon points="746.4,785.4 754.3,781.7 751.3,779.1 743.3,782.8" fill="#000dff"/>
<polygon points="738.4,788.6 746.4,785.4 743.3,782.8 735.4,786" fill="#0007ff"/>
<polygon points="734.5,790.1 738.4,788.6 735.4,786 731.4,787.5" fill="#0004ff"/>
<polygon points="729.3,792.1 734.5,790.1 731.4,787.5 726.3,789.5" fill="#0002ff"/>
<polygon points="726.6,793.1 729.3,792.1 726.3,789.5 723.5,790.5" fill="#0000ff"/>
<polygon points="724.6,793.6 726.6,793.1 723.5,790.5 721.5,791" fill="#0000ff"/>
<polygon points="947.6,585.3 963.4,581 960.4,576.4 944.5,580.7" fill="#8eff00"/>
<polygon points="907.9,610.5 947.6,585.3 944.5,580.7 904.9,607.9" fill="#6dff00"/>
<polygon points="888.1,638.7 907.9,610.5 904.9,607.9 885.1,636.1" fill="#1bff00"/>
<polygon points="868.3,664.3 888.1,638.7 885.1,636.1 865.3,661.7" fill="#00ff41"/>
<polygon points="848.5,690.9 868.3,664.3 865.3,661.7 845.5,688.3" fill="#00ff9a"/>
<polygon points="836.6,707.8 848.5,690.9 845.5,688.3 833.6,705.2" fill="#00ffe4"/>
<polygon points="824.7,722.7 836.6,707.8 833.6,705.2 821.7,720.1" fill="#00e2ff"/>
<polygon points="804.9,748.3 824.7,722.7 821.7,720.1 801.9,745.7" fill="#009eff"/>
<polygon points="793,759.7 804.9,748.3 801.9,745.7 790,757.1" fill="#0061ff"/>
<polygon points="781.1,768.5 793,759.7 790,757.1 778.1,765.9" fill="#0044ff"/>
<polygon points="769.3,776.8 781.1,768.5 778.1,765.9 766.2,774.2" fill="#002dff"/>
<polygon points="765.3,779.4 769.3,776.8 766.2,774.2 762.2,776.8" fill="#001fff"/>
<polygon points="757.4,784.3 765.3,779.4 762.2,776.8 754.3,781.7" fill="#0016ff"/>
<polygon points="749.4,788 757.4,784.3 754.3,781.7 746.4,785.4" fill="#000dff"/>
<polygon points="741.5,791.2 749.4,788 746.4,785.4 738.4,788.6" fill="#0007ff"/>
<polygon points="737.5,792.7 741.5,791.2 738.4,788.6 734.5,790.1" fill="#0004ff"/>
<polygon points="732.4,794.7 737.5,792.7 734.5,790.1 729.3,792.1" fill="#0002ff"/>
<polygon points="729.6,795.7 732.4,794.7 729.3,792.1 726.6,793.1" fill="#0000ff"/>
<polygon points="727.6,796.2 729.6,795.7 726.6,793.1 724.6,793.6" fill="#0000ff"/>
<polygon points="950.6,588.7 966.5,584.3 963.4,581 947.6,585.3" fill="#88ff00"/>
<polygon points="911,613.1 950.6,588.7 947.6,585.3 907.9,610.5" fill="#6aff00"/>
<polygon points="891.2,641.3 911,613.1 907.9,610.5 888.1,638.7" fill="#1bff00"/>
<polygon points="871.4,666.9 891.2,641.3 888.1,638.7 868.3,664.3" fill="#00ff41"/>
<polygon points="851.6,693.5 871.4,666.9 868.3,664.3 848.5,690.9" fill="#00ff9a"/>
<polygon points="839.7,710.4 851.6,693.5 848.5,690.9 836.6,707.8" fill="#00ffe4"/>
<polygon points="827.8,725.3 839.7,710.4 836.6,707.8 824.7,722.7" fill="#00e2ff"/>
<polygon points="808,750.9 827.8,725.3 824.7,722.7 804.9,748.3" fill="#009eff"/>
<polygon points="796.1,762.3 808,750.9 804.9,748.3 793,759.7" fill="#0061ff"/>
<polygon points="784.2,771 796.1,762.3 793,759.7 781.1,768.5" fill="#0044ff"/>
<polygon points="772.3,779.4 784.2,771 781.1,768.5 769.3,776.8" fill="#002dff"/>
<polygon points="768.3,782 772.3,779.4 769.3,776.8 765.3,779.4" fill="#001fff"/>
<polygon points="760.4,786.9 768.3,782 765.3,779.4 757.4,784.3" fill="#0016ff"/>
<polygon points="752.5,790.6 760.4,786.9 757.4,784.3 749.4,788" fill="#000dff"/>
<polygon points="744.5,793.8 752.5,790.6 749.4,788 741.5,791.2" fill="#0007ff"/>
<polygon points="740.6,795.3 744.5,793.8 741.5,791.2 737.5,792.7" fill="#0004ff"/>
<polygon points="735.4,797.3 740.6,795.3 737.5,792.7 732.4,794.7" fill="#0002ff"/>
<polygon points="732.7,798.3 735.4,797.3 732.4,794.7 729.6,795.7" fill="#0000ff"/>
<polygon points="730.7,798.8 732.7,798.3 729.6,795.7 727.6,796.2" fill="#0000ff"/>
<polygon points="953.7,592.3 969.5,587.9 966.5,584.3 950.6,588.7" fill="#84ff00"/>
<polygon points="914,615.7 953.7,592.3 950.6,588.7 911,613.1" fill="#68ff00"/>
<polygon points="894.2,643.9 914,615.7 911,613.1 891.2,641.3" fill="#1bff00"/>
<polygon points="874.4,669.5 894.2,643.9 891.2,641.3 871.4,666.9" fill="#00ff41"/>
<polygon points="854.6,696.1 874.4,669.5 871.4,666.9 851.6,693.5" fill="#00ff9a"/>
<polygon points="842.7,713 854.6,696.1 851.6,693.5 839.7,710.4" fill="#00ffe4"/>
<polygon points="830.8,727.9 842.7,713 839.7,710.4 827.8,725.3" fill="#00e2ff"/>
<polygon points="811,753.5 830.8,727.9 827.8,725.3 808,750.9" fill="#009eff"/>
<polygon points="799.1,764.9 811,753.5 808,750.9 796.1,762.3" fill="#0061ff"/>
<polygon points="787.2,773.6 799.1,764.9 796.1,762.3 784.2,771" fill="#0044ff"/>
<polygon points="775.3,781.9 787.2,773.6 784.2,771 772.3,779.4" fill="#002dff"/>
<polygon points="771.4,784.6 775.3,781.9 772.3,779.4 768.3,782" fill="#001fff"/>
<polygon points="763.5,789.5 771.4,784.6 768.3,782 760.4,786.9" fill="#0016ff"/>
<polygon points="755.5,793.2 763.5,789.5 760.4,786.9 752.5,790.6" fill="#000dff"/>
<polygon points="747.6,796.4 755.5,793.2 752.5,790.6 744.5,793.8" fill="#0007ff"/>
<polygon points="743.6,797.9 747.6,796.4 744.5,793.8 740.6,795.3" fill="#0004ff"/>
<polygon points="738.5,799.9 743.6,797.9 740.6,795.3 735.4,797.3" fill="#0002ff"/>
<polygon points="735.7,800.9 738.5,799.9 735.4,797.3 732.7,798.3" fill="#0000ff"/>
<polygon points="733.7,801.4 735.7,800.9 732.7,798.3 730.7,798.8" fill="#0000ff"/>
<polygon points="956.7,595.6 972.6,591.3 969.5,587.9 953.7,592.3" fill="#80ff00"/>
<polygon points="917.1,618.3 956.7,595.6 953.7,592.3 914,615.7" fill="#66ff00"/>
<polygon points="897.3,646.5 917.1,618.3 914,615.7 894.2,643.9" fill="#1bff00"/>
<polygon points="877.5,672.1 897.3,646.5 894.2,643.9 874.4,669.5" fill="#00ff41"/>
<polygon points="857.6,698.7 877.5,672.1 874.4,669.5 854.6,696.1" fill="#00ff9a"/>
<polygon points="845.8,715.6 857.6,698.7 854.6,696.1 842.7,713" fill="#00ffe4"/>
<polygon points="833.9,730.5 845.8,715.6 842.7,713 830.8,727.9" fill="#00e2ff"/>
<polygon points="814,756.1 833.9,730.5 830.8,727.9 811,753.5" fill="#009eff"/>
<polygon points="802.2,767.5 814,756.1 811,753.5 799.1,764.9" fill="#0061ff"/>
<polygon points="790.3,776.2 802.2,767.5 799.1,764.9 787.2,773.6" fill="#0044ff"/>
<polygon points="778.4,784.5 790.3,776.2 787.2,773.6 775.3,781.9" fill="#002dff"/>
<polygon points="774.4,787.2 778.4,784.5 775.3,781.9 771.4,784.6" fill="#001fff"/>
<polygon points="766.5,792.1 774.4,787.2 771.4,784.6 763.5,789.5" fill="#0016ff"/>
<polygon points="758.6,795.8 766.5,792.1 763.5,789.5 755.5,793.2" fill="#000dff"/>
<polygon points="750.6,799 758.6,795.8 755.5,793.2 747.6,796.4" fill="#0007ff"/>
<polygon points="746.7,800.5 750.6,799 747.6,796.4 743.6,797.9" fill="#0004ff"/>
<polygon points="741.5,802.5 746.7,800.5 743.6,797.9 738.5,799.9" fill="#0002ff"/>
<polygon points="738.8,803.5 741.5,802.5 738.5,799.9 735.7,800.9" fill="#0000ff"/>
<polygon points="736.8,804 738.8,803.5 735.7,800.9 733.7,801.4" fill="#0000ff"/>
<polygon points="959.8,632.1 975.6,627.7 972.6,591.3 956.7,595.6" fill="#36ff00"/>
<polygon points="920.1,642.9 959.8,632.1 956.7,595.6 917.1,618.3" fill="#29ff00"/>
<polygon points="900.3,649.1 920.1,642.9 917.1,618.3 897.3,646.5" fill="#03ff00"/>
<polygon points="880.5,674.7 900.3,649.1 897.3,646.5 877.5,672.1" fill="#00ff41"/>
<polygon points="860.7,701.3 880.5,674.7 877.5,672.1 857.6,698.7" fill="#00ff9a"/>
<polygon points="848.8,718.2 860.7,701.3 857.6,698.7 845.8,715.6" fill="#00ffe4"/>
<polygon points="836.9,733.1 848.8,718.2 845.8,715.6 833.9,730.5" fill="#00e2ff"/>
<polygon points="817.1,758.7 836.9,733.1 833.9,730.5 814,756.1" fill="#009eff"/>
<polygon points="805.2,770.1 817.1,758.7 814,756.1 802.2,767.5" fill="#0061ff"/>
<polygon points="793.3,778.8 805.2,770.1 802.2,767.5 790.3,776.2" fill="#0044ff"/>
<polygon points="781.4,787.1 793.3,778.8 790.3,776.2 778.4,784.5" fill="#002dff"/>
<polygon points="777.5,789.8 781.4,787.1 778.4,784.5 774.4,787.2" fill="#001fff"/>
<polygon points="769.6,794.7 777.5,789.8 774.4,787.2 766.5,792.1" fill="#0016ff"/>
<polygon points="761.6,798.4 769.6,794.7 766.5,792.1 758.6,795.8" fill="#000dff"/>
<polygon points="753.7,801.6 761.6,798.4 758.6,795.8 750.6,799" fill="#0007ff"/>
<polygon points="749.7,803.1 753.7,801.6 750.6,799 746.7,800.5" fill="#0004ff"/>
<polygon points="744.6,805.1 749.7,803.1 746.7,800.5 741.5,802.5" fill="#0002ff"/>
<polygon points="741.8,806.1 744.6,805.1 741.5,802.5 738.8,803.5" fill="#0000ff"/>
<polygon points="739.8,806.6 741.8,806.1 738.8,803.5 736.8,804" fill="#0000ff"/>
<polygon points="962.8,668.2 978.7,663.9 975.6,627.7 959.8,632.1" fill="#00ff5a"/>
<polygon points="923.2,679.1 962.8,668.2 959.8,632.1 920.1,642.9" fill="#00ff5a"/>
<polygon points="903.4,684.5 923.2,679.1 920.1,642.9 900.3,649.1" fill="#00ff5b"/>
<polygon points="883.5,689.9 903.4,684.5 900.3,649.1 880.5,674.7" fill="#00ff71"/>
<polygon points="863.7,703.9 883.5,689.9 880.5,674.7 860.7,701.3" fill="#00ffa7"/>
<polygon points="851.9,720.8 863.7,703.9 860.7,701.3 848.8,718.2" fill="#00ffe4"/>
<polygon points="840,735.7 851.9,720.8 848.8,718.2 836.9,733.1" fill="#00e2ff"/>
<polygon points="820.1,761.3 840,735.7 836.9,733.1 817.1,758.7" fill="#009eff"/>
<polygon points="808.3,772.7 820.1,761.3 817.1,758.7 805.2,770.1" fill="#0061ff"/>
<polygon points="796.4,781.4 808.3,772.7 805.2,770.1 793.3,778.8" fill="#0044ff"/>
<polygon points="784.5,789.7 796.4,781.4 793.3,778.8 781.4,787.1" fill="#002dff"/>
<polygon points="780.5,792.4 784.5,789.7 781.4,787.1 777.5,789.8" fill="#001fff"/>
<polygon points="772.6,797.3 780.5,792.4 777.5,789.8 769.6,794.7" fill="#0016ff"/>
<polygon points="764.7,801 772.6,797.3 769.6,794.7 761.6,798.4" fill="#000dff"/>
<polygon points="756.7,804.2 764.7,801 761.6,798.4 753.7,801.6" fill="#0007ff"/>
<polygon points="752.8,805.7 756.7,804.2 753.7,801.6 749.7,803.1" fill="#0004ff"/>
<polygon points="747.6,807.7 752.8,805.7 749.7,803.1 744.6,805.1" fill="#0002ff"/>
<polygon points="744.9,808.7 747.6,807.7 744.6,805.1 741.8,806.1" fill="#0000ff"/>
<polygon points="742.9,809.2 744.9,808.7 741.8,806.1 739.8,806.6" fill="#0000ff"/>
<polygon points="965.9,677.1 981.7,672.8 978.7,663.9 962.8,668.2" fill="#00ffb0"/>
<polygon points="926.2,688 965.9,677.1 962.8,668.2 923.2,679.1" fill="#00ffb0"/>
<polygon points="906.4,693.4 926.2,688 923.2,679.1 903.4,684.5" fill="#00ffb0"/>
<polygon points="886.6,698.8 906.4,693.4 903.4,684.5 883.5,689.9" fill="#00ffb0"/>
<polygon points="866.8,706.5 886.6,698.8 883.5,689.9 863.7,703.9" fill="#00ffbb"/>
<polygon points="854.9,723.4 866.8,706.5 863.7,703.9 851.9,720.8" fill="#00ffe4"/>
<polygon points="843,738.3 854.9,723.4 851.9,720.8 840,735.7" fill="#00e2ff"/>
<polygon points="823.2,763.9 843,738.3 840,735.7 820.1,761.3" fill="#009eff"/>
<polygon points="811.3,775.3 823.2,763.9 820.1,761.3 808.3,772.7" fill="#0061ff"/>
<polygon points="799.4,784 811.3,775.3 808.3,772.7 796.4,781.4" fill="#0044ff"/>
<polygon points="787.5,792.3 799.4,784 796.4,781.4 784.5,789.7" fill="#002dff"/>
<polygon points="783.6,795 787.5,792.3 784.5,789.7 780.5,792.4" fill="#001fff"/>
<polygon points="775.7,799.9 783.6,795 780.5,792.4 772.6,797.3" fill="#0016ff"/>
<polygon points="767.7,803.6 775.7,799.9 772.6,797.3 764.7,801" fill="#000dff"/>
<polygon points="759.8,806.8 767.7,803.6 764.7,801 756.7,804.2" fill="#0007ff"/>
<polygon points="755.8,808.3 759.8,806.8 756.7,804.2 752.8,805.7" fill="#0004ff"/>
<polygon points="750.7,810.3 755.8,808.3 752.8,805.7 747.6,807.7" fill="#0002ff"/>
<polygon points="747.9,811.3 750.7,810.3 747.6,807.7 744.9,808.7" fill="#0000ff"/>
<polygon points="745.9,811.8 747.9,811.3 744.9,808.7 742.9,809.2" fill="#0000ff"/>
<polygon points="968.3,685.5 984.2,681.2 981.7,672.8 965.9,677.1" fill="#00ffcb"/>
<polygon points="928.7,696.4 968.3,685.5 965.9,677.1 926.2,688" fill="#00ffcb"/>
<polygon points="908.9,701.8 928.7,696.4 926.2,688 906.4,693.4" fill="#00ffcb"/>
<polygon points="889,707.2 908.9,701.8 906.4,693.4 886.6,698.8" fill="#00ffcb"/>
<polygon points="869.2,712.6 889,707.2 886.6,698.8 866.8,706.5" fill="#00ffcd"/>
<polygon points="857.3,725.5 869.2,712.6 866.8,706.5 854.9,723.4" fill="#00ffe9"/>
<polygon points="845.5,740.4 857.3,725.5 854.9,723.4 843,738.3" fill="#00e2ff"/>
<polygon points="825.6,766 845.5,740.4 843,738.3 823.2,763.9" fill="#009eff"/>
<polygon points="813.7,777.3 825.6,766 823.2,763.9 811.3,775.3" fill="#0061ff"/>
<polygon points="801.9,786.1 813.7,777.3 811.3,775.3 799.4,784" fill="#0044ff"/>
<polygon points="790,794.4 801.9,786.1 799.4,784 787.5,792.3" fill="#002dff"/>
<polygon points="786,797 790,794.4 787.5,792.3 783.6,795" fill="#001fff"/>
<polygon points="778.1,802 786,797 783.6,795 775.7,799.9" fill="#0016ff"/>
<polygon points="770.1,805.7 778.1,802 775.7,799.9 767.7,803.6" fill="#000dff"/>
<polygon points="762.2,808.8 770.1,805.7 767.7,803.6 759.8,806.8" fill="#0007ff"/>
<polygon points="758.3,810.4 762.2,808.8 759.8,806.8 755.8,808.3" fill="#0004ff"/>
<polygon points="753.1,812.3 758.3,810.4 755.8,808.3 750.7,810.3" fill="#0002ff"/>
<polygon points="750.3,813.3 753.1,812.3 750.7,810.3 747.9,811.3" fill="#0000ff"/>
<polygon points="748.4,813.9 750.3,813.3 747.9,811.3 745.9,811.8" fill="#0000ff"/>
<polygon points="970.7,696.5 986.6,692.1 984.2,681.2 968.3,685.5" fill="#00ffeb"/>
<polygon points="931.1,707.3 970.7,696.5 968.3,685.5 928.7,696.4" fill="#00ffeb"/>
<polygon points="911.3,712.7 931.1,707.3 928.7,696.4 908.9,701.8" fill="#00ffeb"/>
<polygon points="891.5,718.1 911.3,712.7 908.9,701.8 889,707.2" fill="#00ffeb"/>
<polygon points="871.7,723.6 891.5,718.1 889,707.2 869.2,712.6" fill="#00ffeb"/>
<polygon points="859.8,727.6 871.7,723.6 869.2,712.6 857.3,725.5" fill="#00fff7"/>
<polygon points="847.9,742.5 859.8,727.6 857.3,725.5 845.5,740.4" fill="#00e2ff"/>
<polygon points="828.1,768.1 847.9,742.5 845.5,740.4 825.6,766" fill="#009eff"/>
<polygon points="816.2,779.4 828.1,768.1 825.6,766 813.7,777.3" fill="#0061ff"/>
<polygon points="804.3,788.2 816.2,779.4 813.7,777.3 801.9,786.1" fill="#0044ff"/>
<polygon points="792.4,796.5 804.3,788.2 801.9,786.1 790,794.4" fill="#002dff"/>
<polygon points="788.5,799.1 792.4,796.5 790,794.4 786,797" fill="#001fff"/>
<polygon points="780.5,804 788.5,799.1 786,797 778.1,802" fill="#0016ff"/>
<polygon points="772.6,807.7 780.5,804 778.1,802 770.1,805.7" fill="#000dff"/>
<polygon points="764.7,810.9 772.6,807.7 770.1,805.7 762.2,808.8" fill="#0007ff"/>
<polygon points="760.7,812.5 764.7,810.9 762.2,808.8 758.3,810.4" fill="#0004ff"/>
<polygon points="755.6,814.4 760.7,812.5 758.3,810.4 753.1,812.3" fill="#0002ff"/>
<polygon points="752.8,815.4 755.6,814.4 753.1,812.3 750.3,813.3" fill="#0000ff"/>
<polygon points="750.8,816 752.8,815.4 750.3,813.3 748.4,813.9" fill="#0000ff"/>
<polygon points="973.2,707.4 989,703 986.6,692.1 970.7,696.5" fill="#00ecff"/>
<polygon points="933.5,718.2 973.2,707.4 970.7,696.5 931.1,707.3" fill="#00ecff"/>
<polygon points="913.7,723.6 933.5,718.2 931.1,707.3 911.3,712.7" fill="#00ecff"/>
<polygon points="893.9,729.1 913.7,723.6 911.3,712.7 891.5,718.1" fill="#00ecff"/>
<polygon points="874.1,734.5 893.9,729.1 891.5,718.1 871.7,723.6" fill="#00ecff"/>
<polygon points="862.2,737.7 874.1,734.5 871.7,723.6 859.8,727.6" fill="#00ebff"/>
<polygon points="850.3,744.5 862.2,737.7 859.8,727.6 847.9,742.5" fill="#00daff"/>
<polygon points="830.5,770.2 850.3,744.5 847.9,742.5 828.1,768.1" fill="#009eff"/>
<polygon points="818.6,781.5 830.5,770.2 828.1,768.1 816.2,779.4" fill="#0061ff"/>
<polygon points="806.7,790.3 818.6,781.5 816.2,779.4 804.3,788.2" fill="#0044ff"/>
<polygon points="794.9,798.6 806.7,790.3 804.3,788.2 792.4,796.5" fill="#002dff"/>
<polygon points="790.9,801.2 794.9,798.6 792.4,796.5 788.5,799.1" fill="#001fff"/>
<polygon points="783,806.1 790.9,801.2 788.5,799.1 780.5,804" fill="#0016ff"/>
<polygon points="775,809.8 783,806.1 780.5,804 772.6,807.7" fill="#000dff"/>
<polygon points="767.1,813 775,809.8 772.6,807.7 764.7,810.9" fill="#0007ff"/>
<polygon points="763.1,814.6 767.1,813 764.7,810.9 760.7,812.5" fill="#0004ff"/>
<polygon points="758,816.5 763.1,814.6 760.7,812.5 755.6,814.4" fill="#0002ff"/>
<polygon points="755.2,817.5 758,816.5 755.6,814.4 752.8,815.4" fill="#0000ff"/>
<polygon points="753.2,818 755.2,817.5 752.8,815.4 750.8,816" fill="#0000ff"/>
<polygon points="975.6,709.5 991.5,705.1 989,703 973.2,707.4" fill="#00d9ff"/>
<polygon points="936,720.3 975.6,709.5 973.2,707.4 933.5,718.2" fill="#00d9ff"/>
<polygon points="916.2,725.7 936,720.3 933.5,718.2 913.7,723.6" fill="#00d9ff"/>
<polygon points="896.3,731.1 916.2,725.7 913.7,723.6 893.9,729.1" fill="#00d9ff"/>
<polygon points="876.5,736.6 896.3,731.1 893.9,729.1 874.1,734.5" fill="#00d9ff"/>
<polygon points="864.7,739.8 876.5,736.6 874.1,734.5 862.2,737.7" fill="#00d9ff"/>
<polygon points="852.8,746.6 864.7,739.8 862.2,737.7 850.3,744.5" fill="#00d1ff"/>
<polygon points="832.9,772.2 852.8,746.6 850.3,744.5 830.5,770.2" fill="#009eff"/>
<polygon points="821.1,783.6 832.9,772.2 830.5,770.2 818.6,781.5" fill="#0061ff"/>
<polygon points="809.2,792.4 821.1,783.6 818.6,781.5 806.7,790.3" fill="#0044ff"/>
<polygon points="797.3,800.7 809.2,792.4 806.7,790.3 794.9,798.6" fill="#002dff"/>
<polygon points="793.3,803.3 797.3,800.7 794.9,798.6 790.9,801.2" fill="#001fff"/>
<polygon points="785.4,808.2 793.3,803.3 790.9,801.2 783,806.1" fill="#0016ff"/>
<polygon points="777.5,811.9 785.4,808.2 783,806.1 775,809.8" fill="#000dff"/>
<polygon points="769.5,815.1 777.5,811.9 775,809.8 767.1,813" fill="#0007ff"/>
<polygon points="765.6,816.6 769.5,815.1 767.1,813 763.1,814.6" fill="#0004ff"/>
<polygon points="760.4,818.6 765.6,816.6 763.1,814.6 758,816.5" fill="#0002ff"/>
<polygon points="757.7,819.6 760.4,818.6 758,816.5 755.2,817.5" fill="#0000ff"/>
<polygon points="755.7,820.1 757.7,819.6 755.2,817.5 753.2,818" fill="#0000ff"/>
<polygon points="976.8,710.5 992.7,706.2 991.5,705.1 975.6,709.5" fill="#00d9ff"/>
<polygon points="937.2,721.3 976.8,710.5 975.6,709.5 936,720.3" fill="#00d9ff"/>
<polygon points="917.4,726.8 937.2,721.3 936,720.3 916.2,725.7" fill="#00d9ff"/>
<polygon points="897.6,732.2 917.4,726.8 916.2,725.7 896.3,731.1" fill="#00d9ff"/>
<polygon points="877.8,737.6 897.6,732.2 896.3,731.1 876.5,736.6" fill="#00d9ff"/>
<polygon points="865.9,740.9 877.8,737.6 876.5,736.6 864.7,739.8" fill="#00d9ff"/>
<polygon points="854,747.7 865.9,740.9 864.7,739.8 852.8,746.6" fill="#00d1ff"/>
<polygon points="834.2,773.3 854,747.7 852.8,746.6 832.9,772.2" fill="#009eff"/>
<polygon points="822.3,784.6 834.2,773.3 832.9,772.2 821.1,783.6" fill="#0061ff"/>
<polygon points="810.4,793.4 822.3,784.6 821.1,783.6 809.2,792.4" fill="#0044ff"/>
<polygon points="798.5,801.7 810.4,793.4 809.2,792.4 797.3,800.7" fill="#002dff"/>
<polygon points="794.5,804.3 798.5,801.7 797.3,800.7 793.3,803.3" fill="#001fff"/>
<polygon points="786.6,809.2 794.5,804.3 793.3,803.3 785.4,808.2" fill="#0016ff"/>
<polygon points="778.7,812.9 786.6,809.2 785.4,808.2 777.5,811.9" fill="#000dff"/>
<polygon points="770.8,816.1 778.7,812.9 777.5,811.9 769.5,815.1" fill="#0007ff"/>
<polygon points="766.8,817.7 770.8,816.1 769.5,815.1 765.6,816.6" fill="#0004ff"/>
<polygon points="761.7,819.6 766.8,817.7 765.6,816.6 760.4,818.6" fill="#0002ff"/>
<polygon points="758.9,820.6 761.7,819.6 760.4,818.6 757.7,819.6" fill="#0000ff"/>
<polygon points="756.9,821.2 758.9,820.6 757.7,819.6 755.7,820.1" fill="#0000ff"/>
<polygon points="978.1,711.5 993.9,707.2 992.7,706.2 976.8,710.5" fill="#00d9ff"/>
<polygon points="938.4,722.4 978.1,711.5 976.8,710.5 937.2,721.3" fill="#00d9ff"/>
<polygon points="918.6,727.8 938.4,722.4 937.2,721.3 917.4,726.8" fill="#00d9ff"/>
<polygon points="898.8,733.2 918.6,727.8 917.4,726.8 897.6,732.2" fill="#00d9ff"/>
<polygon points="879,738.6 898.8,733.2 897.6,732.2 877.8,737.6" fill="#00d9ff"/>
<polygon points="867.1,741.9 879,738.6 877.8,737.6 865.9,740.9" fill="#00d9ff"/>
<polygon points="855.2,748.7 867.1,741.9 865.9,740.9 854,747.7" fill="#00d1ff"/>
<polygon points="835.4,774.3 855.2,748.7 854,747.7 834.2,773.3" fill="#009eff"/>
<polygon points="823.5,785.7 835.4,774.3 834.2,773.3 822.3,784.6" fill="#0061ff"/>
<polygon points="811.6,794.4 823.5,785.7 822.3,784.6 810.4,793.4" fill="#0044ff"/>
<polygon points="799.7,802.7 811.6,794.4 810.4,793.4 798.5,801.7" fill="#002dff"/>
<polygon points="795.8,805.4 799.7,802.7 798.5,801.7 794.5,804.3" fill="#001fff"/>
<polygon points="787.8,810.3 795.8,805.4 794.5,804.3 786.6,809.2" fill="#0016ff"/>
<polygon points="779.9,814 787.8,810.3 786.6,809.2 778.7,812.9" fill="#000dff"/>
<polygon points="772,817.2 779.9,814 778.7,812.9 770.8,816.1" fill="#0007ff"/>
<polygon points="768,818.7 772,817.2 770.8,816.1 766.8,817.7" fill="#0004ff"/>
<polygon points="762.9,820.7 768,818.7 766.8,817.7 761.7,819.6" fill="#0002ff"/>
<polygon points="760.1,821.7 762.9,820.7 761.7,819.6 758.9,820.6" fill="#0000ff"/>
<polygon points="758.1,822.2 760.1,821.7 758.9,820.6 756.9,821.2" fill="#0000ff"/>
<polygon points="980.4,713.5 996.2,709.2 993.9,707.2 978.1,711.5" fill="#00d9ff"/>
<polygon points="940.7,724.4 980.4,713.5 978.1,711.5 938.4,722.4" fill="#00d9ff"/>
<polygon points="920.9,729.8 940.7,724.4 938.4,722.4 918.6,727.8" fill="#00d9ff"/>
<polygon points="901.1,735.2 920.9,729.8 918.6,727.8 898.8,733.2" fill="#00d9ff"/>
<polygon points="881.3,740.6 901.1,735.2 898.8,733.2 879,738.6" fill="#00d9ff"/>
<polygon points="869.4,743.9 881.3,740.6 879,738.6 867.1,741.9" fill="#00d9ff"/>
<polygon points="857.5,750.7 869.4,743.9 867.1,741.9 855.2,748.7" fill="#00d1ff"/>
<polygon points="837.7,776.3 857.5,750.7 855.2,748.7 835.4,774.3" fill="#009eff"/>
<polygon points="825.8,787.6 837.7,776.3 835.4,774.3 823.5,785.7" fill="#0061ff"/>
<polygon points="813.9,796.4 825.8,787.6 823.5,785.7 811.6,794.4" fill="#0044ff"/>
<polygon points="802,804.7 813.9,796.4 811.6,794.4 799.7,802.7" fill="#002dff"/>
<polygon points="798.1,807.3 802,804.7 799.7,802.7 795.8,805.4" fill="#001fff"/>
<polygon points="790.2,812.2 798.1,807.3 795.8,805.4 787.8,810.3" fill="#0016ff"/>
<polygon points="782.2,816 790.2,812.2 787.8,810.3 779.9,814" fill="#000dff"/>
<polygon points="774.3,819.1 782.2,816 779.9,814 772,817.2" fill="#0007ff"/>
<polygon points="770.3,820.7 774.3,819.1 772,817.2 768,818.7" fill="#0004ff"/>
<polygon points="765.2,822.6 770.3,820.7 768,818.7 762.9,820.7" fill="#0002ff"/>
<polygon points="762.4,823.6 765.2,822.6 762.9,820.7 760.1,821.7" fill="#0000ff"/>
<polygon points="760.4,824.2 762.4,823.6 760.1,821.7 758.1,822.2" fill="#0000ff"/>
<polygon points="980.5,755 996.3,750.7 996.2,709.2 980.4,713.5" fill="#0080ff"/>
<polygon points="940.9,765.9 980.5,755 980.4,713.5 940.7,724.4" fill="#0080ff"/>
<polygon points="921.1,771.3 940.9,765.9 940.7,724.4 920.9,729.8" fill="#0080ff"/>
<polygon points="901.2,776.7 921.1,771.3 920.9,729.8 901.1,735.2" fill="#0080ff"/>
<polygon points="881.4,782.1 901.2,776.7 901.1,735.2 881.3,740.6" fill="#0080ff"/>
<polygon points="869.5,785.4 881.4,782.1 881.3,740.6 869.4,743.9" fill="#0080ff"/>
<polygon points="857.6,788.6 869.5,785.4 869.4,743.9 857.5,750.7" fill="#007cff"/>
<polygon points="837.8,794.1 857.6,788.6 857.5,750.7 837.7,776.3" fill="#0062ff"/>
<polygon points="825.9,797.3 837.8,794.1 837.7,776.3 825.8,787.6" fill="#0044ff"/>
<polygon points="814.1,800.6 825.9,797.3 825.8,787.6 813.9,796.4" fill="#0035ff"/>
<polygon points="802.2,804.8 814.1,800.6 813.9,796.4 802,804.7" fill="#0029ff"/>
<polygon points="798.2,807.4 802.2,804.8 802,804.7 798.1,807.3" fill="#001fff"/>
<polygon points="790.3,812.4 798.2,807.4 798.1,807.3 790.2,812.2" fill="#0016ff"/>
<polygon points="782.3,816.1 790.3,812.4 790.2,812.2 782.2,816" fill="#000dff"/>
<polygon points="774.4,819.2 782.3,816.1 782.2,816 774.3,819.1" fill="#0007ff"/>
<polygon points="770.5,820.8 774.4,819.2 774.3,819.1 770.3,820.7" fill="#0004ff"/>
<polygon points="765.3,822.7 770.5,820.8 770.3,820.7 765.2,822.6" fill="#0002ff"/>
<polygon points="762.5,823.7 765.3,822.7 765.2,822.6 762.4,823.6" fill="#0000ff"/>
<polygon points="760.5,824.3 762.5,823.7 762.4,823.6 760.4,824.2" fill="#0000ff"/>
<polygon points="990.3,763.3 1006.1,759 996.3,750.7 980.5,755" fill="#0027ff"/>
<polygon points="950.6,774.2 990.3,763.3 980.5,755 940.9,765.9" fill="#0027ff"/>
<polygon points="930.8,779.6 950.6,774.2 940.9,765.9 921.1,771.3" fill="#0027ff"/>
<polygon points="911,785 930.8,779.6 921.1,771.3 901.2,776.7" fill="#0027ff"/>
<polygon points="891.2,790.4 911,785 901.2,776.7 881.4,782.1" fill="#0027ff"/>
<polygon points="879.3,793.7 891.2,790.4 881.4,782.1 869.5,785.4" fill="#0027ff"/>
<polygon points="867.4,796.9 879.3,793.7 869.5,785.4 857.6,788.6" fill="#0027ff"/>
<polygon points="847.6,802.4 867.4,796.9 857.6,788.6 837.8,794.1" fill="#0027ff"/>
<polygon points="835.7,805.6 847.6,802.4 837.8,794.1 825.9,797.3" fill="#0027ff"/>
<polygon points="823.8,808.9 835.7,805.6 825.9,797.3 814.1,800.6" fill="#0027ff"/>
<polygon points="811.9,813.1 823.8,808.9 814.1,800.6 802.2,804.8" fill="#0024ff"/>
<polygon points="808,815.8 811.9,813.1 802.2,804.8 798.2,807.4" fill="#001fff"/>
<polygon points="800,820.7 808,815.8 798.2,807.4 790.3,812.4" fill="#0016ff"/>
<polygon points="792.1,824.4 800,820.7 790.3,812.4 782.3,816.1" fill="#000dff"/>
<polygon points="784.2,827.6 792.1,824.4 782.3,816.1 774.4,819.2" fill="#0007ff"/>
<polygon points="780.2,829.1 784.2,827.6 774.4,819.2 770.5,820.8" fill="#0004ff"/>
<polygon points="775.1,831.1 780.2,829.1 770.5,820.8 765.3,822.7" fill="#0002ff"/>
<polygon points="772.3,832.1 775.1,831.1 765.3,822.7 762.5,823.7" fill="#0000ff"/>
<polygon points="770.3,832.6 772.3,832.1 762.5,823.7 760.5,824.3" fill="#0000ff"/>
</g>
<g font-size="8.8" fill="#0000ff" text-anchor="end">
<text x="633.6" y="675.6">11.75</text>
<text x="633.6" y="628.1">23.50</text>
<text x="633.6" y="580.6">35.25</text>
<text x="633.6" y="533.2">47.00</text>
<text x="633.6" y="485.7">58.75</text>
</g><g font-size="8.8" fill="#0000ff">
<text x="1008.5" y="726.5">11.75</text>
<text x="1008.5" y="679.1">23.50</text>
<text x="1008.5" y="631.6">35.25</text>
<text x="1008.5" y="584.1">47.00</text>
<text x="1008.5" y="536.6">58.75</text>
</g>
<g font-size="8.6" fill="#ff0000" text-anchor="end" letter-spacing="-0.25">
<text x="766.1" y="837.6">0</text>
<text x="756.3" y="829.3">800</text>
<text x="741.7" y="816.8">2000</text>
<text x="726.5" y="803.8">3250</text>
<text x="711.2" y="790.8">4500</text>
<text x="693.0" y="775.2">6000</text>
<text x="674.7" y="759.6">7500</text>
<text x="656.4" y="744.0">9000</text>
<text x="638.1" y="728.4">10500</text>
</g><g font-size="8.6" fill="#000" letter-spacing="-0.1">
<text x="772.6" y="838.9">0.00</text>
<text x="794.4" y="832.9">9.24</text>
<text x="814.2" y="827.5">17.65</text>
<text x="849.9" y="817.8">32.77</text>
<text x="881.6" y="809.1">46.22</text>
<text x="913.3" y="800.4">59.66</text>
<text x="952.9" y="789.6">76.47</text>
<text x="992.6" y="778.7">93.28</text>
</g>
<text x="656" y="805.5" font-size="10" font-weight="bold" fill="#ff0000">RPM</text>
<text x="898" y="838" font-size="10" font-weight="bold" fill="#606060">% Accelerator</text>
<text transform="translate(579.2,629.3) rotate(-90)" textLength="58.3" font-size="11" font-weight="bold" fill="#0000ff">% Throttle</text>
<text transform="translate(1063,678.8) rotate(-90)" textLength="57" font-size="11" font-weight="bold" fill="#0000ff">% Throttle</text>
<text x="822" y="399" font-size="9" fill="#c4c4c4" text-anchor="middle">TunerPro - Version 5.00</text>
<text x="821.5" y="417" font-size="14.1" font-weight="bold" fill="#000" text-anchor="middle">Ride by Wire - gear 3-4 - Rain</text>
</svg></div>
<div id="gsb"><i style="left:123.5px"></i><i style="left:248px"></i></div>
</div>
<svg class="wm" style="position:absolute;left:0;top:0;pointer-events:none" width="1445" height="886" viewBox="0 0 1445 886">
<defs><filter id="fat" x="-5%" y="-5%" width="110%" height="110%"><feMorphology operator="dilate" radius="3.6 0"/></filter>
<mask id="pm"><rect width="1445" height="886" fill="#fff"/></mask></defs>
<g opacity="0.30" fill="#000" stroke="none">
<path d="M279.2 282.0 L278.3 275.1 L277.6 267.7 L277.1 259.9 L277.0 250.5 L277.1 242.9 L277.5 236.9 L278.2 231.3 L279.2 226.1 L280.4 221.0 M285.2 208.0 L287.3 203.9 L289.6 200.0 L292.1 196.3 L294.8 192.7 L297.8 189.3 L300.9 186.1 L304.3 183.1 L307.9 180.2 L311.6 177.5 L315.6 175.0 L319.7 172.7 L324.1 170.6 L328.6 168.6 L333.3 166.9 L338.2 165.4 L343.3 164.1 L348.5 163.0 L354.0 162.1 L359.8 161.4 L365.9 160.9 L372.5 160.7 L380.9 160.6 L388.0 160.8 L394.3 161.2 L400.2 161.7 L405.8 162.5 L411.1 163.6 L416.3 164.8 L421.3 166.2 L426.0 167.8 L430.6 169.7 L435.1 171.7 L439.3 173.9 L443.3 176.4 L447.2 179.0 L450.8 181.8 L454.3 184.7 L457.6 187.9 L460.6 191.2 L463.4 194.7 L466.1 198.4 L468.5 202.2 L470.6 206.2 L472.6 210.3 L474.3 214.7 L475.8 219.1 L477.0 223.8 L478.0 228.6 L478.8 233.7 L479.3 239.1 L479.6 244.9 L479.7 253.2 L479.5 261.4 L479.1 268.7 L478.4 275.5 L477.5 282.0" fill="none" stroke="#000" stroke-width="6.6" stroke-linejoin="miter"/>
<path d="M279.5 208.5 L305.8 198 L327.9 229 L345.8 214.5 L368.2 272.4" fill="none" stroke="#000" stroke-width="6.6" stroke-linejoin="miter" stroke-miterlimit="10"/>
<path d="M276 222 L301.9 215 L323.2 248.7 L342.2 230.6 L368.2 272.4" fill="none" stroke="#000" stroke-width="6.6" stroke-linejoin="miter" stroke-miterlimit="10"/>
<path d="M296.6 292.9 C312 286.5 346 290 364.5 308.7 C352 322 330 330 316 323 C305 317 298 303 296.6 292.9Z"/>
<path d="M462 292.9 C446.6 286.5 412.6 290 394.1 308.7 C406.6 322 428.6 330 442.6 323 C453.6 317 460.6 303 462 292.9Z"/>
<path d="M379.5 323.5 L400.8 362.8 L391 385.7 L378.5 349.7 L368 375.9 L358.2 359.5 Z"/>
<path d="M338.0 385.3 L342.9 399.6 L347.8 396.2 L352.6 408.9 L357.5 404.1 L362.4 415.2 L367.2 408.7 L372.1 418.3 L377.0 410.3 L381.9 418.3 L386.8 408.7 L391.6 415.2 L396.5 404.1 L401.4 408.9 L406.2 396.2 L411.1 399.6 L416.0 385.3" fill="none" stroke="#000" stroke-width="4.6" stroke-linejoin="miter" stroke-miterlimit="6"/>
<g transform="translate(237.2 372.4) rotate(33.1)"><path fill-rule="evenodd" d="M0 -37.7 L13.7 -37.7 L13.7 37.7 L0 37.7 Z M18 -37.7 L72.6 -37.7 L72.6 -28.5 L59.5 -18.5 L60.5 21.5 L71.5 25.5 L72 37.7 L18 37.7 Z M48 0.5 A10 10 0 1 0 28 0.5 A10 10 0 1 0 48 0.5Z M66 -8.4 L212 -8.4 L212 10.2 L66 10.2 Z"/><path fill-rule="evenodd" d="M251.7 1.2 A28 28 0 1 0 195.7 1.2 A28 28 0 1 0 251.7 1.2Z M234.89999999999998 1.2 A11.2 11.2 0 1 1 212.5 1.2 A11.2 11.2 0 1 1 234.89999999999998 1.2Z"/></g>
<g transform="translate(760.0 0) scale(-1 1) translate(237.2 372.4) rotate(33.1)"><path fill-rule="evenodd" d="M0 -37.7 L13.7 -37.7 L13.7 37.7 L0 37.7 Z M18 -37.7 L72.6 -37.7 L72.6 -28.5 L59.5 -18.5 L60.5 21.5 L71.5 25.5 L72 37.7 L18 37.7 Z M48 0.5 A10 10 0 1 0 28 0.5 A10 10 0 1 0 48 0.5Z M66 -8.4 L212 -8.4 L212 10.2 L66 10.2 Z"/><path fill-rule="evenodd" d="M251.7 1.2 A28 28 0 1 0 195.7 1.2 A28 28 0 1 0 251.7 1.2Z M234.89999999999998 1.2 A11.2 11.2 0 1 1 212.5 1.2 A11.2 11.2 0 1 1 234.89999999999998 1.2Z"/></g>
<path d="M240.6 449.1 L245.3 463.5 L260.5 463.5 L248.2 472.5 L252.9 486.9 L240.6 478.0 L228.3 486.9 L233.0 472.5 L220.7 463.5 L235.9 463.5Z"/>
<path d="M518.4 449.1 L523.1 463.5 L538.3 463.5 L526.0 472.5 L530.7 486.9 L518.4 478.0 L506.1 486.9 L510.8 472.5 L498.5 463.5 L513.7 463.5Z"/>
</g>
<g opacity="0.30" filter="url(#fat)"><text y="644" font-family="Liberation Sans, sans-serif" font-weight="bold" fill="#000"><tspan x="95.1" font-size="170.5" textLength="44.3" lengthAdjust="spacingAndGlyphs">O</tspan><tspan x="169.4" font-size="150.3" textLength="43.2" lengthAdjust="spacingAndGlyphs">L</tspan><tspan x="239.0" font-size="136.3" textLength="46.9" lengthAdjust="spacingAndGlyphs">D</tspan><tspan x="317.2" font-size="125.7" textLength="46.9" lengthAdjust="spacingAndGlyphs">S</tspan><tspan x="396.4" font-size="126.4" textLength="49.2" lengthAdjust="spacingAndGlyphs">K</tspan><tspan x="473.4" font-size="136.3" textLength="49.2" lengthAdjust="spacingAndGlyphs">U</tspan><tspan x="551.4" font-size="146.7" textLength="43.2" lengthAdjust="spacingAndGlyphs">L</tspan><tspan x="620.4" font-size="167.6" textLength="43.7" lengthAdjust="spacingAndGlyphs">L</tspan></text></g>
<g opacity="0.30"><text y="711" x="189.5 266.5 346.0 417.3 487.5 568.0" text-anchor="middle" font-family="Liberation Sans, sans-serif" font-weight="bold" font-size="44.5" fill="#000" stroke="#000" stroke-width="3" stroke-linejoin="miter">TUNING</text></g>
</svg>
</body></html>
